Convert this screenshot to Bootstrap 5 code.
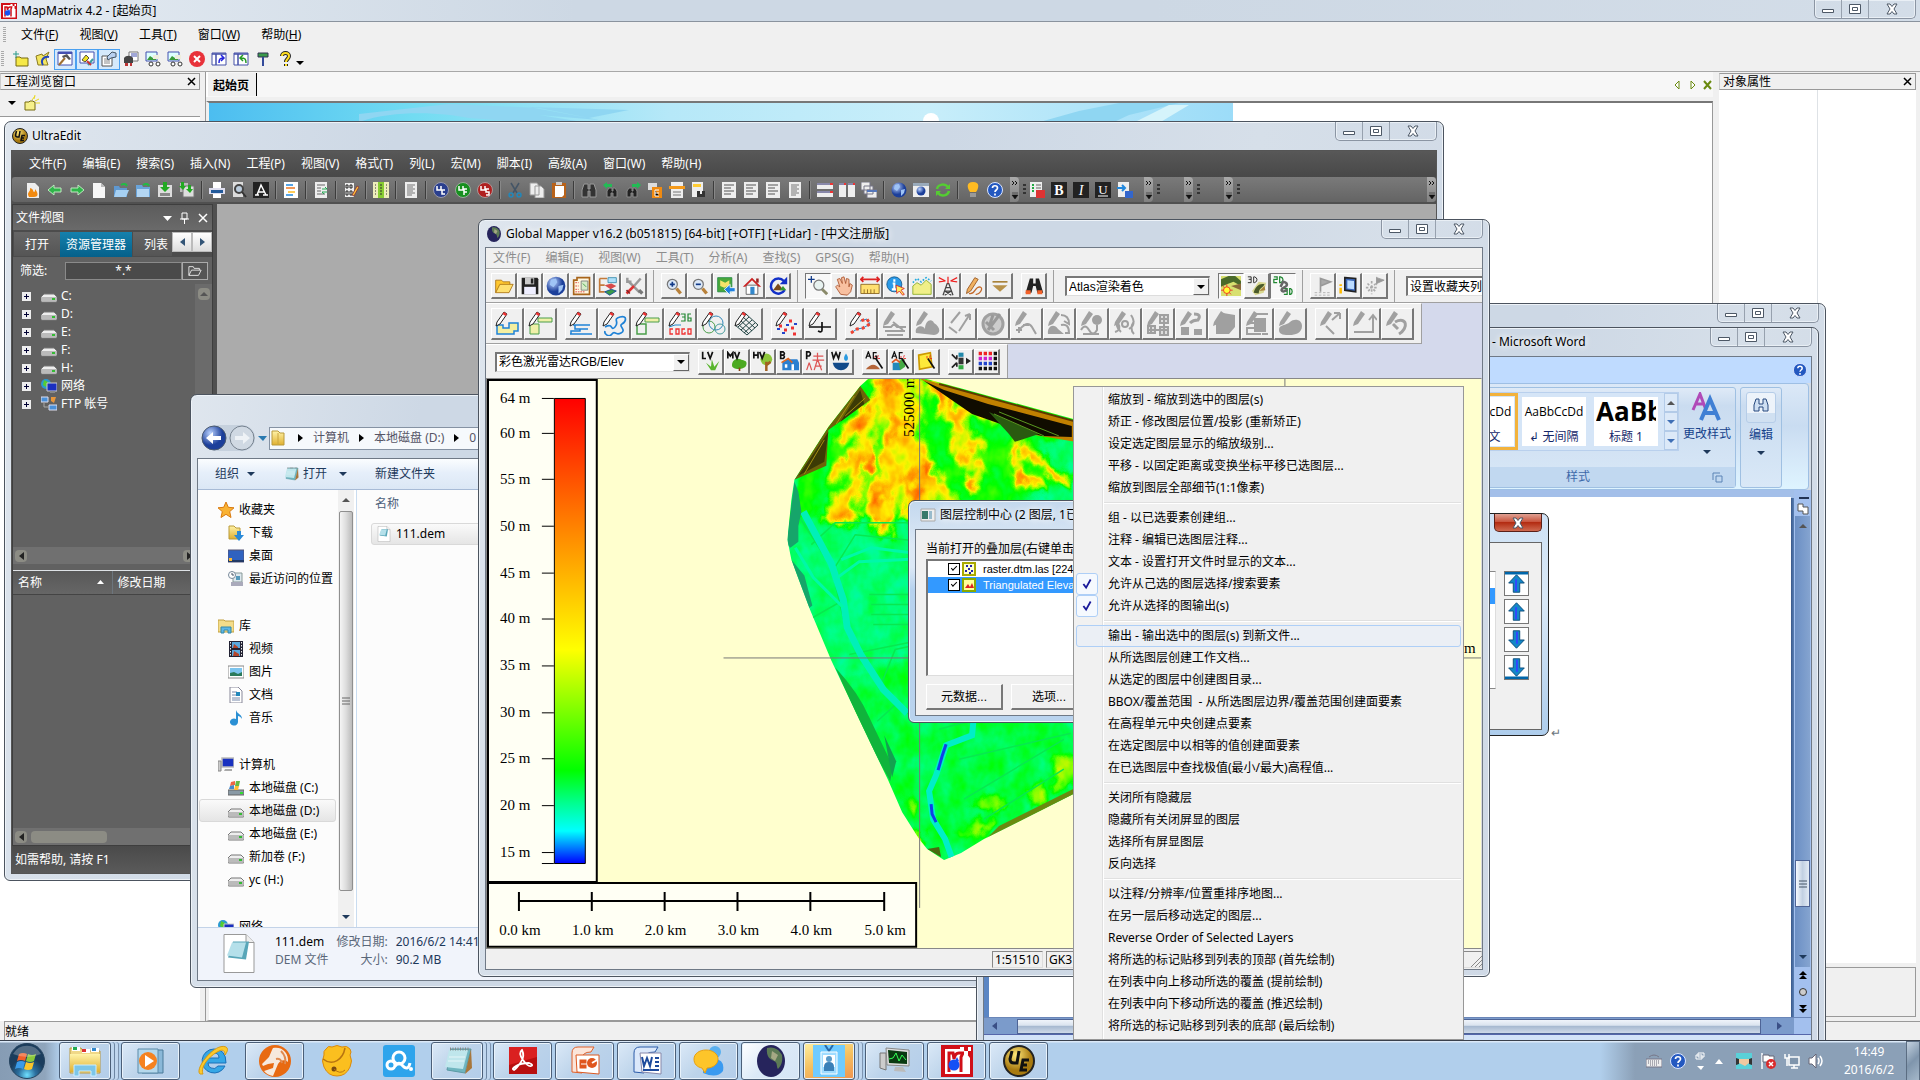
<!DOCTYPE html>
<html lang="zh-CN">
<head>
<meta charset="utf-8">
<meta name="viewport" content="width=device-width, initial-scale=1">
<title>MapMatrix 4.2 - [起始页]</title>
<link href="https://cdn.jsdelivr.net/npm/bootstrap@5.3.0/dist/css/bootstrap.min.css" rel="stylesheet">
<style>
body{font:12px/16px "Noto Sans","Noto Sans CJK SC",sans-serif;color:#000;background:#f0f0f0;height:100vh;overflow:hidden}
a{color:inherit;text-decoration:none}
button{font:inherit;color:inherit;padding:0;border:0;background:none;border-radius:0}
svg{display:block;flex:none}
.ic{width:16px;height:16px}
.plain{font-family:"Liberation Sans","Noto Sans CJK SC",sans-serif}
.desk{overflow:hidden;min-height:0}
/* window frame */
.win{position:absolute;border:1px solid #4c545f;border-radius:7px 7px 6px 6px;background:linear-gradient(100deg,#dfe6ee 0,#cdd8e5 25%,#cdd8e5 60%,#d6dfe9 80%,#cfd9e6);box-shadow:inset 0 0 0 1px #eef3f8;padding:0 6px 6px}
.win-title{height:28px;padding-left:1px;text-shadow:0 0 6px #fff,0 0 8px #fff}
.win-body{border:1px solid #6f7986;min-height:0}
.ctl{height:19px;border:1px solid #8b95a3;border-top:0;border-radius:0 0 5px 5px;box-shadow:inset 0 0 0 1px #e9eff5}
.ctl button{width:27px;height:18px;border-right:1px solid #97a1ae;display:flex;align-items:center;justify-content:center}
.ctl button:last-child{width:46px;border:0}
/* host application */
.mm-title{height:22px;background:linear-gradient(90deg,#e4ebf2 0,#cdd8e4 30%,#cdd8e4 60%,#d3dde8);border-bottom:1px solid #8a939e;padding-left:1px}
.mm-menu{height:25px;padding-left:10px}
.mm-menu a{padding:0 12px 0 9px}
.mm-tools{height:25px;padding-left:8px;border-bottom:1px solid #a8a8a8}
.mm-tools button{width:22px;height:21px;display:flex;align-items:center;justify-content:center}
.mm-tools .on{border:1px solid #4aa0f0;background:#d5e9fb}
.grip{width:3px;height:16px;margin-left:-7px;margin-right:6px;background:repeating-linear-gradient(#aaa 0 1px,transparent 1px 2px)}
.pane-head{height:17px;border:1px solid #999;border-left-color:#ccc;padding:0 3px;margin-top:1px}
.mm-left{width:200px}.mm-right{width:197px;margin-left:6px;margin-right:4px}
.mm-left-tools{height:27px;border-bottom:1px solid #999;padding-left:8px}
.mm-center{margin-left:5px;border-left:1px solid #999}
.mm-tabs{height:25px;background:#f7f7f7;border-left:2px solid #fff}
.mm-tab{padding:0 7px 0 5px;border-right:1px solid #000;background:#f0f0f0;height:23px;line-height:25px}
.mm-page{border:1px solid #999;border-top:2px solid #777;border-left:3px solid #f0f0f0;background:#fff;margin-top:4px}
.mm-note{height:50px;border:1px solid #999}
.banner{width:1024px;max-width:100%;height:60px}
.status{height:19px;border-top:1px solid #999;margin-left:4px;border-left:1px solid #999;line-height:20px}
/* UltraEdit */
.w-ue{left:4px;top:121px;width:1440px;height:760px}
.ue{background:#505050;color:#fff;border-color:#555}
.ue-menu{height:26px;background:linear-gradient(#585858,#484848);padding-left:9px}
.ue-menu a{padding:0 8px}
.ue-tools{height:25px;background:linear-gradient(#7a7a7a,#646464);border-radius:3px;padding-left:10px}
.ue-tools button{width:22px;height:22px;display:flex;align-items:center;justify-content:center}
.vr1{width:2px;height:18px;margin:0 3px;background:#3c3c3c;border-right:1px solid #888}
.dots{width:3px;height:12px;margin-right:3px;background:repeating-linear-gradient(#333 0 2px,transparent 2px 4px)}
.more{width:9px;height:25px;background:linear-gradient(#aaa,#808080);border-radius:0 4px 4px 0;display:flex;align-items:center;justify-content:center;margin-left:auto}
.ue-main{min-height:0;padding-top:2px}
.ue-side{width:201px;background:#616161;border:1px solid #3e3e3e}
.ue-head{height:25px;background:linear-gradient(#5c5c5c,#6a6a6a);padding:0 4px 0 3px}
.ue-tabs{height:27px;background:#4c4c4c;padding-top:2px}
.ue-tabs a{background:linear-gradient(#666,#555);height:24px;line-height:25px;padding:0 11px;margin-left:1px}
.ue-tabs a.on{background:linear-gradient(#1581ad,#05608a);padding:0 6px;height:25px;margin:0}
.ue-tabs .nudge{width:20px;height:20px;background:linear-gradient(#fff,#ddd);border:1px solid #bbb;color:#357;display:flex;align-items:center;justify-content:center}
.ue-filter{height:27px;padding:0 4px 0 7px}
.ue-filter input{width:117px;height:18px;background:#4a4a4a;border:1px solid #8a8a8a;color:#fff;text-align:center;padding:0;font:inherit}
.ue-filter button{width:26px;height:18px;border:1px solid #aaa;background:#555;display:flex;align-items:center;justify-content:center}
.ue-tree{padding:3px 0 0 9px;height:263px}
.ue-tree a{height:18px;display:flex;align-items:center}
.plus{width:9px;height:9px;margin-right:10px}
.ue-vs{width:17px;background:#6b6b6b}
.sbtn{width:12px;height:12px;border-radius:4px;background:#8c8c84;color:#222;display:flex;align-items:center;justify-content:center}
.sbtn.long{width:76px}
.ue-hs{height:17px;background:#707070;padding:0 1px 0 2px}
.ue-cols{height:25px;background:linear-gradient(#585858,#666);border-bottom:1px solid #444;margin-top:6px}
.ue-cols span{padding-left:5px;line-height:24px}
.ue-status{height:27px;background:linear-gradient(#4a4a4a,#5a5a5a);padding-left:3px;line-height:27px}
.ue-view{background:#ababab}
/* Explorer */
.w-ex{left:190px;top:394px;width:830px;height:594px}
.ex-nav{height:63px;padding:31px 0 8px 3px}
.addr{height:23px;border:1px solid #8592a3;background:#f6f9fc;color:#556}
.addr span{margin-right:10px}
.tri{width:0;height:0;border:4px solid transparent;border-right:0;border-left:5px solid #000}
.trl{width:0;height:0;border:4px solid transparent;border-left:0;border-right:5px solid currentColor}
.trr{width:0;height:0;border:4px solid transparent;border-right:0;border-left:5px solid currentColor}
.trd{width:0;height:0;border:4px solid transparent;border-bottom:0;border-top:4px solid #1e395b}
.tru{width:0;height:0;border:4px solid transparent;border-top:0;border-bottom:4px solid #555}
.ex-bar{height:31px;background:linear-gradient(#fbfdff,#e6effa 45%,#dbe7f5);border-bottom:1px solid #a7bbd6;color:#1e395b;padding-left:17px}
.ex-tree{width:140px;padding-top:8px;background:#fcfcfc;overflow:hidden}
.ex-tree a{height:23px;display:flex;align-items:center;gap:5px;padding-left:20px;white-space:nowrap;flex:none}
.ex-tree a.sub{padding-left:29px;margin-right:2px;margin-left:1px}
.ex-tree a.sel,.ex-item{border:1px solid #d9d9d9;border-radius:3px;background:linear-gradient(#fafafa,#e5e5e5)}
.ex-tree a.sel{padding-left:28px}
.ex-scroll{width:16px;background:#f0f0f0}
.ex-thumb{width:14px;height:380px;border:1px solid #8f8f8f;border-radius:2px;background:linear-gradient(90deg,#f5f5f5,#ddd 50%,#bbb)}
.ex-list{background:#fcfcfc;border-left:1px solid #c9dcf0;margin-left:2px;padding:6px 0 0 14px}
.ex-col{color:#4c607a;margin-bottom:11px;padding-left:4px}
.ex-item{height:22px;padding-left:4px}
.ex-det{height:53px;background:#f1f4fb;border-top:1px solid #c3d3e8;padding:5px 0 0 25px;line-height:18px;color:#5a6779}
.ex-det b{font-weight:400;color:#1e395b}
/* Word */
.w-wo{left:976px;top:303px;width:850px;bottom:-8px}
.w-wi{left:976px;top:327px;width:843px;bottom:-8px}
.wd-name{margin-left:508px}
.wd-tab{height:26px;background:#bfdbff;padding-right:4px}
.wd-rib{height:107px;background:linear-gradient(#dbe8f7,#c9dcf1 40%,#d2e4f6 60%,#def4ff);border:1px solid #9ebfe4;border-radius:0 4px 4px 0;margin-right:2px;padding:3px 26px 1px 0}
.wd-grp{border:1px solid #9fc0e2;border-radius:3px;background:linear-gradient(#dfeaf7,#cadcf0 18%,#d9e8f7);color:#15428b}
.wd-edit{width:42px}
.wd-grp .cap{height:20px;background:#c1d8f0;color:#3e6aaa;text-align:center;line-height:20px;padding-right:9px}
.cap-name{margin-right:120px}
.gal{height:59px;border:1px solid #b9d0ed;background:#d5e5f7;padding-left:4px}
.gal a{width:64px;height:49px;background:#fff;margin-right:8px;text-align:center;overflow:hidden;color:#000;white-space:nowrap;padding:7px 2px 0;line-height:16px}
.gal a span{font-family:"Open Sans",sans-serif}
.gal a small{display:block;font-size:12px;line-height:16px;margin-top:9px;color:#15286a}
.gal a.cur{outline:3px solid #f2b23c;outline-offset:1px}
.gal a.big{padding-top:0;margin-right:6px}
.gal a.big b{display:block;font:bold 26px/29px "Open Sans",sans-serif;width:60px;overflow:hidden;text-align:left}
.gal a.big small{margin-top:3px}
.gsc{width:14px}
.gsc i{border-top-color:#3f6fb5}
.gsc span{height:19px;border:1px solid #b3cbe8;display:flex;align-items:center;justify-content:center;background:#dce9f8}
.edbtn{width:30px;height:31px;border:1px solid #b6cde8;border-radius:3px;background:linear-gradient(#edf3fa 70%,#d0e0f1 70%)}
.wd-doc{background:#a3bfe9}
.wd-gl{width:10px;background:#5b86c4}
.wd-gr{width:7px;background:linear-gradient(90deg,#38588a,#5a80b5)}
.wd-page{background:#fff;margin-top:7px;padding:16px 226px 0 0}
.wd-ret{width:16px;margin-top:212px;padding-left:2px}
.wd-vs{width:17px;background:#a3c0ee}
.wd-track{background:linear-gradient(90deg,#6b8fc4,#85a4d0);margin:0 1px}
.wd-thumb{border:1px solid #4e6496;background:linear-gradient(90deg,#f5f9fe,#c2d0e2 50%,#e3ebf5);height:47px;width:15px}
.wd-hs{height:17px;background:#7b9bcb;border-top:1px solid #6a86b8;color:#3a4f86}
.wd-hth{height:15px;border:1px solid #4e6496;background:linear-gradient(#f0f4fa,#dbe4ef 40%,#a8bad1 50%,#cfdae8)}
.wd-corner{width:17px;height:16px;background:#a3c0ee}
.wd-foot{height:6px;background:#d3e3f8;border-top:1px solid #56a}
.shot{width:560px;height:223px;border:1px solid #222;border-radius:0 7px 7px 0;background:linear-gradient(#cfe2f5,#d9e8f6 40%,#aecdec);padding:0 6px 6px 0}
.xred{width:48px;height:18px;background:linear-gradient(#e0a193,#c9563f 45%,#b32c12 50%,#cf6a50);border:1px solid #5b2018;border-top:0;border-radius:0 0 5px 5px;display:flex;align-items:center;justify-content:center}
.shot-body{border:1px solid #666;background:#f0f0f0;margin-top:10px;height:188px;padding:28px 12px 0 0}
.shot-list{width:530px;height:118px;background:#fff;border:1px solid #888;border-right-color:#ddd;padding-top:16px}
.shot-list div{height:16px;background:#3399ff}
.shot-body button{width:25px;height:25px;border:1px solid #777;background:#fff;display:block;margin-bottom:3px}
/* Global Mapper */
.w-gm{left:478px;top:219px;width:1012px;height:758px}
.w-gm .win-title{height:27px}
.gm{background:#f0f0f0}
.gm-menu{height:21px;color:#8d8d8d;border-bottom:1px solid #aaa}
.gm-menu a{padding:0 8px 0 7px}
.gm-row{background:#d4d9ec;overflow:hidden}
.gm-strip{background:#f0f0f0;border-top:1px solid #fff;border-bottom:1px solid #a0a0a0;border-right:1px solid #a0a0a0;padding:0 7px 0 5px;height:34px}
.gm-strip.tall{height:41px}
.gb{width:26px;height:26px;border:1px solid #fff;border-right:2px solid #777;border-bottom:2px solid #777;display:flex;align-items:center;justify-content:center;flex:none}
.gb svg{width:20px;height:20px}
.tall .gb{width:33px;height:32px}
.tall .gb svg{width:26px;height:26px}
.gb.on{border:1px solid #777;border-right-color:#fff;border-bottom-color:#fff;background:#f8f8f8}
.gs{width:8px;flex:none}
.gv{width:1px;height:32px;background:#a0a0a0;margin:0 7px 0 6px;flex:none}
.dd{height:20px;border:2px solid #777;border-right:1px solid #ddd;border-bottom:1px solid #ddd;background:#fff;display:flex;flex:none}
.dd select{appearance:none;border:0;background:#fff;font:inherit;padding:0 2px;flex:1;min-width:0;color:#000;line-height:16px}
.dd i{width:16px;background:#f0f0f0;border:1px solid #fff;border-right-color:#666;border-bottom-color:#666;display:flex;align-items:center;justify-content:center}
.dd .trd,.mm-tools .trd,.mm-left-tools .trd{border-top-color:#000}
.dd-a{width:145px}.dd-b{width:195px}.dd-c{width:130px}
.gm-map{border:1px solid #888;border-right-color:#ddd;background:#ffffce;overflow:hidden;min-height:0}
.gm-map svg{width:100%;height:100%}
.gm-map text{font:15px "Liberation Serif",serif}
.gm-st{height:20px;padding:2px 0 2px 506px}
.gm-st span{border:1px solid #888;border-right-color:#ddd;border-bottom-color:#ddd;padding:0 2px;width:51px;margin-right:3px;line-height:15px;height:17px;white-space:nowrap}
.gm-st .wide{flex:1}
.sizer{margin-left:-12px}
/* layer dialog */
.w-ly{left:908px;top:500px;width:540px;height:223px;background:linear-gradient(#c3d8ee,#dce8f5 20%,#dbe8f5 30%,#b6d2ee 40%,#b9d3ee)}
.ly{background:#f0f0f0;padding:11px 12px 0 10px}
.ly-list{border:2px solid #777;border-right:1px solid #ddd;border-bottom:1px solid #ddd;background:#fff;height:117px;margin-top:2px;font-size:11px}
.ly-list label{height:16px;display:flex;align-items:center;padding-left:20px;white-space:nowrap}
.ly-list label.sel{background:#3399ff;color:#fff}
.ly-list input{appearance:none;width:12px;height:12px;background:#fff;border:1px solid #000;margin:0 2px 0 0;position:relative}
.ly-list input::after{content:"";position:absolute;left:2px;top:2px;width:6px;height:3px;border:solid #000;border-width:0 0 1px 1px;transform:rotate(-45deg)}
.ly-list svg{width:14px;height:14px;margin-right:7px}
.ly .cmd{width:77px;height:26px;border:1px solid #fff;border-right:2px solid #777;border-bottom:2px solid #777;background:#f0f0f0}
/* context menu */
.ctx{position:absolute;left:1073px;top:386px;width:391px;background:linear-gradient(90deg,#f1f1f1 28px,#e0e0e0 28px 29px,#fff 29px 30px,#f0f0f0 30px);border:1px solid #979797;padding:2px;z-index:5}
.ctx a{display:flex;align-items:center;height:22px;padding-left:32px;white-space:pre;border-radius:3px;margin:0}
.ctx a.hot{border:1px solid #aecff7;background:rgba(232,239,248,.6);padding-left:31px}
.ctx hr{margin:3px 0 3px 28px;border:0;border-top:1px solid #e0e0e0;border-bottom:1px solid #fff;opacity:1;height:2px}
.ctx a.ck{padding-left:0}
.ctx a.ck svg{width:22px;height:22px;border:1px solid #aecff7;background:#f5f9fe;border-radius:3px;margin-right:10px}
/* taskbar */
.task{height:40px;background:linear-gradient(#dbe9f8 0 1px,transparent 2px),linear-gradient(90deg,#869cb4 0,#8fa5bc 45px,#b1cfec 60px,#b1cfec 1600px,#8ba0b7 1635px,#8ba0b7);border-top:1px solid #39414d;position:relative;z-index:6}
.orb{width:59px;display:flex;align-items:center;justify-content:center;padding-right:5px}
.tk{width:59px;height:38px;margin-right:3px;display:flex;align-items:center;justify-content:center}
.tk svg{width:32px;height:32px}
.tk.run{border:1px solid #4b5f78;border-radius:3px;background:linear-gradient(135deg,#dbe9f7,#bcd3ea 50%,#b3cdea);box-shadow:inset 0 0 0 1px #e8f2fb}
.tk.act{background:linear-gradient(135deg,#fff,#dbe9f7 50%,#d5e5f5)}
.tk.stk{width:52px;box-shadow:inset 0 0 0 1px #e8f2fb,3px 0 0 #bfd6ee,4px 0 0 #6d86a3,7px 0 0 #bfd6ee,8px 0 0 #7d94b0;margin-right:10px}
.tk.hot{background:linear-gradient(160deg,#fff0a0,#f4c060 50%,#ef9350)}
.tray{color:#fff;gap:8px}
.clock{width:74px;text-align:center;line-height:18px}
.peek{width:14px;height:40px;border:1px solid #5b6d82;background:linear-gradient(135deg,#c4d2e0,#7f95ac 50%,#a5b8ca)}
</style>
<script src="https://cdn.jsdelivr.net/npm/bootstrap@5.3.0/dist/js/bootstrap.bundle.min.js"></script>
</head>
<body class="d-flex flex-column">
<svg width="0" height="0" class="position-absolute" aria-hidden="true">
<defs>
<linearGradient id="gold" x2="0" y2="1"><stop stop-color="#fff3a8"/><stop offset="1" stop-color="#e0b030"/></linearGradient>
<radialGradient id="ball" cx=".35" cy=".3"><stop stop-color="#bcd4ff"/><stop offset="1" stop-color="#1c3f9a"/></radialGradient>
<radialGradient id="orbg" cx=".5" cy=".9"><stop stop-color="#6fe0ff"/><stop offset=".5" stop-color="#2b6f9e"/><stop offset="1" stop-color="#1b3d5d"/></radialGradient>
<radialGradient id="uegold" cx=".4" cy=".3"><stop stop-color="#ffe87a"/><stop offset="1" stop-color="#a87a10"/></radialGradient>
<g id="pencil"><path d="M3 12 10 2l3 2-7 10-4 2z" fill="#fff" stroke="#222"/><path d="M10 2l3 2-1.500 2-3-2z" fill="#e33"/></g>
<g id="gpen" fill="#a0a0a0"><path d="M3 12 10 1l4 3-7 10-5 2z"/></g>
<g id="wand" fill="none"><path d="M13 9l8 12" stroke="#111" stroke-width="2"/><path d="M12 6v3M16 5l-1 3M18 9l-3 0" stroke="#e22"/></g>
</defs>
<symbol id="mm" viewBox="0 0 32 32"><path d="M0 0h32v32H0z" fill="#d00f18"/><path d="M4 4h18l7 9v16H4z" fill="#fff"/><path d="M8 27V8h4l1 6q1-6 5-6h4l-2 4v15" fill="none" stroke="#d00f18" stroke-width="3"/><circle cx="13" cy="20" r="5.500" fill="#1450f5"/><path d="M16 12l-4 8 6-4z" fill="#1450f5"/><path d="M19 2h4v4h4v4h-4V6h-4zM27 2h3v4h-3z" fill="#fff"/></symbol>
<symbol id="fnew" viewBox="0 0 16 16"><path d="M3 6h4l1 1h7v8H3z" fill="#f6e948" stroke="#776a10"/><path d="M3 0v7M0 3h6" stroke="#2a9a8a"/></symbol>
<symbol id="fspark" viewBox="0 0 16 16"><path d="M1 7h4l1-1h3l1 1h1v8H1z" fill="#f6f08a" stroke="#776a10"/><path d="M8 5l3-4M11 6l4-2M12 8h4M10 4l1-4" stroke="#e8d820"/></symbol>
<symbol id="opy" viewBox="0 0 16 16"><path d="M1 5l6-2 1 2 6-4-3 7 2 6H3z" fill="#f2e560" stroke="#8a7a20"/><path d="M8 14c-3-5 1-9 6-8" fill="none" stroke="#2244b8" stroke-width="2"/></symbol>
<symbol id="ham" viewBox="0 0 16 16"><path d="M1 1h14v13H1z" fill="#fff" stroke="#4450b0"/><path d="M1 2h14" stroke="#4450b0" stroke-width="2"/><path d="M2 14l6-7" stroke="#a07030" stroke-width="2"/><path d="M5 5l5-2 4 5-2 1-3-3-3 1z" fill="#555"/></symbol>
<symbol id="tools" viewBox="0 0 16 16"><path d="M1 1h14v11H1z" fill="#fff" stroke="#4450b0"/><path d="M3 9l4-5 3 3-4 4z" fill="#f0e020" stroke="#554"/><path d="M9 14l5-6" stroke="#3aa0a0" stroke-width="2"/><path d="M8 10l4 4" stroke="#c33" stroke-width="2"/></symbol>
<symbol id="props" viewBox="0 0 16 16"><path d="M1 5h10v10H1z" fill="#fff" stroke="#555"/><path d="M3 8h6M3 10h6M3 12h6" stroke="#888"/><path d="M6 6l5-5 4 1v4l-5 1-3 2z" fill="#b8d0f0" stroke="#456"/></symbol>
<symbol id="cam" viewBox="0 0 16 16"><path d="M6 1h9v9H6z" fill="#fff" stroke="#777"/><path d="M8 3h6M8 5h6" stroke="#4450b0"/><path d="M1 7c2-3 7-3 9 0v5H1z" fill="#444"/><path d="M2 12v3h3v-3M7 12v3h2v-3" fill="#b33"/></symbol>
<symbol id="car" viewBox="0 0 16 16"><path d="M1 1h11v9H1z" fill="#dff" stroke="#4450b0"/><path d="M2 9l3-4 3 2 3-3v5z" fill="#3a9a3a"/><path d="M8 4h6v4H8z" fill="#eed"/><circle cx="6" cy="13" r="2" fill="#fff" stroke="#333"/><circle cx="13" cy="13" r="2" fill="#fff" stroke="#333"/></symbol>
<symbol id="stop" viewBox="0 0 16 16"><circle cx="8" cy="8" r="8" fill="#e8323a"/><path d="M5 5l6 6M11 5l-6 6" stroke="#fff" stroke-width="2"/></symbol>
<symbol id="wf" viewBox="0 0 16 16"><path d="M1 2h14v12H1z" fill="#fff" stroke="#4450a8"/><path d="M1 3h14M5 3v11" stroke="#4450a8" stroke-width="1.500"/><path d="M8 12c0-4 1-5 5-5M10 4l3 3-3 3" fill="none" stroke="#22d" stroke-width="1.500"/></symbol>
<symbol id="wb" viewBox="0 0 16 16"><path d="M1 2h14v12H1z" fill="#fff" stroke="#4450a8"/><path d="M1 3h14M5 3v11" stroke="#4450a8" stroke-width="1.500"/><path d="M13 12c0-4-1-5-5-5M10 4L7 7l3 3" fill="none" stroke="#292" stroke-width="1.500"/></symbol>
<symbol id="tee" viewBox="0 0 16 16"><path d="M3 2h10v4H3z" fill="#3a9a4a" stroke="#335"/><path d="M8 6v9" stroke="#334a9a" stroke-width="2"/></symbol>
<symbol id="qy" viewBox="0 0 16 16"><path d="M5 5c0-4 7-4 7 0 0 3-3 3-3 6M9 13v2" fill="none" stroke="#222" stroke-width="4"/><path d="M5 5c0-4 7-4 7 0 0 3-3 3-3 6M9 13v2" fill="none" stroke="#fd2" stroke-width="2"/></symbol>
<symbol id="ue" viewBox="0 0 32 32"><circle cx="16" cy="16" r="15" fill="url(#uegold)" stroke="#222" stroke-width="2"/><path d="M9 6l-2 8q0 4 4 4h3l2-12" fill="none" stroke="#111" stroke-width="3"/><path d="M26 15h-6l-2 10h6M19 20h5" fill="none" stroke="#111" stroke-width="3"/></symbol>
<symbol id="fl" viewBox="0 0 16 16"><path d="M2 1h8l4 4v11H2z" fill="#eee"/><path d="M4 15c-3-5 2-5 1-9 4 1 3 4 4 4s1-2 1-3c4 5 3 8-1 8z" fill="#f28a10"/></symbol>
<symbol id="al" viewBox="0 0 16 16"><path d="M1 8l6-5v3h7v4H7v3z" fill="#2fb54a" stroke="#bfe8c0"/></symbol>
<symbol id="ar" viewBox="0 0 16 16"><path d="M15 8L9 3v3H2v4h7v3z" fill="#2fb54a" stroke="#bfe8c0"/></symbol>
<symbol id="doc" viewBox="0 0 16 16"><path d="M2 1h8l4 4v11H2z" fill="#f6f6f6"/><path d="M10 1l4 4h-4z" fill="#bbb"/></symbol>
<symbol id="fb" viewBox="0 0 16 16"><path d="M1 4h5l1 2h7v9H1z" fill="#5f98d0"/><path d="M3 8h13l-3 7H1z" fill="#a6d0f2"/><path d="M8 3c3-2 5-1 6 1" fill="none" stroke="#2b4" stroke-width="2"/></symbol>
<symbol id="fb2" viewBox="0 0 16 16"><path d="M1 3h6l1 2h7v10H1z" fill="#6aa4da"/><path d="M2 7h12v8H2z" fill="#b3d6f3"/><path d="M8 3c3-2 5-1 6 1" fill="none" stroke="#2b4" stroke-width="2"/></symbol>
<symbol id="sv" viewBox="0 0 16 16"><path d="M1 3h14v12H1z" fill="#ddd"/><path d="M6 0h4v5h3l-5 5-5-5h3z" fill="#2a2"/><path d="M3 11h10v3H3z" fill="#888"/></symbol>
<symbol id="sva" viewBox="0 0 16 16"><path d="M1 1h8v9H1z" fill="#bbb"/><path d="M4 4h11v11H4z" fill="#ddd" stroke="#777"/><path d="M2 0h3v4h2L4 8 0 4h2zM9 3h3v4h2l-3 4-4-4h2z" fill="#2a2"/></symbol>
<symbol id="prn" viewBox="0 0 16 16"><path d="M4 0h8v6H4zM4 11h8v5H4z" fill="#fff"/><path d="M0 6h16v6H0z" fill="#dde"/><path d="M2 8h12v3H2z" fill="#235a9a"/></symbol>
<symbol id="prv" viewBox="0 0 16 16"><path d="M2 0h10v15H2z" fill="#ddd"/><circle cx="8" cy="7" r="4" fill="#bcd" stroke="#444" stroke-width="2"/><path d="M11 10l4 5" stroke="#333" stroke-width="2"/></symbol>
<symbol id="fa" viewBox="0 0 16 16"><path d="M0 0h16v16H0z" fill="#222"/><path d="M2 13h4M10 13h5M4 13L8 3l5 10M5 10h6" fill="none" stroke="#fff" stroke-width="1.500"/></symbol>
<symbol id="lc" viewBox="0 0 16 16"><path d="M1 0h14v16H1z" fill="#fff"/><path d="M3 3h7M3 13h7" stroke="#28d" stroke-width="1.500"/><path d="M3 6h9" stroke="#e72" stroke-width="1.500"/><path d="M5 10h7" stroke="#fb2" stroke-width="1.500"/></symbol>
<symbol id="lg" viewBox="0 0 16 16"><path d="M2 0h12v16H2z" fill="#eee"/><path d="M4 3h8M4 6h4M4 9h4M4 12h8" stroke="#666"/><path d="M9 7h5l-2-2M14 10H9l2 2" stroke="#2a5" fill="none"/></symbol>
<symbol id="hx" viewBox="0 0 16 16"><path d="M2 1h9v14H2z" fill="#eee"/><path d="M3 3h2v3H3zM7 3h2v3H7zM3 9h2v4H3zM7 9h2v4H7z" fill="none" stroke="#222"/><path d="M9 13l5-9 2 1-5 9z" fill="#fb3" stroke="#844"/></symbol>
<symbol id="cl" viewBox="0 0 16 16"><path d="M0 0h16v16H0z" fill="#eeb"/><path d="M5 0h6v16H5z" fill="#8c3"/><path d="M2 3h1M2 6h1M2 9h1M2 12h1M7 3h2M7 6h2M7 9h2M7 12h2M13 3h1M13 6h1M13 9h1M13 12h1" stroke="#333"/></symbol>
<symbol id="ln" viewBox="0 0 16 16"><path d="M2 0h12v16H2z" fill="#eee"/><path d="M4 3h8M4 5h6M4 7h8M4 9h6M4 11h8M4 13h5" stroke="#777"/></symbol>
<symbol id="uc" viewBox="0 0 16 16"><circle cx="8" cy="8" r="7.500" fill="#2a3f8e" stroke="#99a"/><path d="M4 4v4h4V4M12 8H9v4h3" fill="none" stroke="#fff" stroke-width="1.500"/></symbol>
<symbol id="uf" viewBox="0 0 16 16"><circle cx="8" cy="8" r="7.500" fill="#17901f" stroke="#9a9"/><path d="M4 4v4h4V4M12 7H9v6M9 10h3" fill="none" stroke="#fff" stroke-width="1.500"/></symbol>
<symbol id="us" viewBox="0 0 16 16"><circle cx="8" cy="8" r="7.500" fill="#b02020" stroke="#a99"/><path d="M4 4v4h4V4M12 7H9v3h3v3H9" fill="none" stroke="#fff" stroke-width="1.500"/></symbol>
<symbol id="cut" viewBox="0 0 16 16"><path d="M4 1l6 10M12 1L6 11" stroke="#456" stroke-width="1.500"/><circle cx="4" cy="13" r="2" fill="none" stroke="#28b" stroke-width="1.500"/><circle cx="12" cy="13" r="2" fill="none" stroke="#28b" stroke-width="1.500"/></symbol>
<symbol id="cpy" viewBox="0 0 16 16"><path d="M1 1h7l2 3v9H1zM6 4h6l3 3v9H6z" fill="#eee" stroke="#999"/></symbol>
<symbol id="pst" viewBox="0 0 16 16"><path d="M1 1h14v15H1z" fill="#b8621a"/><path d="M4 4h9v9l-2 2H4z" fill="#fff"/><path d="M5 0h6v3H5z" fill="#ccc"/></symbol>
<symbol id="bn" viewBox="0 0 16 16"><path d="M1 15V8l2-6h4v5h2V2h4l2 6v7H9V9H7v6z" fill="#333" stroke="#999"/></symbol>
<symbol id="bl" viewBox="0 0 16 16"><path d="M4 15V9l2-3h3v3h1V6h2l2 3v6h-4v-4H8v4z" fill="#222" stroke="#888"/><path d="M0 3l4-3v2h5v3H4v2z" fill="#2b5"/></symbol>
<symbol id="br" viewBox="0 0 16 16"><path d="M2 15V9l2-3h3v3h1V6h2l2 3v6H8v-4H6v4z" fill="#222" stroke="#888"/><path d="M16 3l-4-3v2H7v3h5v2z" fill="#2b5"/></symbol>
<symbol id="bk" viewBox="0 0 16 16"><path d="M1 1h9v7H1z" fill="#ddd"/><path d="M5 5h10v11H5z" fill="#f08a10"/><path d="M8 8h4M8 11h4M8 8v6h4" stroke="#fff"/></symbol>
<symbol id="hl" viewBox="0 0 16 16"><path d="M2 0h12v16H2z" fill="#eee"/><path d="M0 4h16v3H0z" fill="#f59a1a"/><path d="M4 10h8M4 13h8" stroke="#777"/></symbol>
<symbol id="fi" viewBox="0 0 16 16"><path d="M1 0h11v15H1z" fill="#eee"/><path d="M2 2h8v3H2z" fill="#fc3"/><path d="M6 15V9h3v3h2V9h3v6z" fill="#333"/></symbol>
<symbol id="tx" viewBox="0 0 16 16"><path d="M1 0h14v16H1z" fill="#eee"/><path d="M3 3h10M3 6h7M3 9h10M3 12h7" stroke="#555"/></symbol>
<symbol id="w2" viewBox="0 0 16 16"><path d="M0 1h16v6H0zM0 9h16v6H0z" fill="#eee"/><path d="M0 1h16v2H0zM0 9h16v2H0z" fill="#88a"/><path d="M13 1h3v2h-3zM13 9h3v2h-3z" fill="#e33"/></symbol>
<symbol id="w2v" viewBox="0 0 16 16"><path d="M0 1h7v14H0zM9 1h7v14H9z" fill="#eee"/><path d="M0 1h7v2H0zM9 1h7v2H9z" fill="#88a"/><path d="M5 1h2v2H5zM14 1h2v2h-2z" fill="#e33"/></symbol>
<symbol id="w3" viewBox="0 0 16 16"><path d="M0 0h9v8H0zM3 4h9v8H3zM6 8h10v8H6z" fill="#eee" stroke="#778"/><path d="M6 8h10v2H6z" fill="#57b"/></symbol>
<symbol id="ww" viewBox="0 0 16 16"><path d="M0 1h16v14H0z" fill="#eee"/><path d="M0 1h16v3H0z" fill="#9ab"/><circle cx="8" cy="9" r="4.500" fill="url(#ball)"/></symbol>
<symbol id="glb" viewBox="0 0 16 16"><circle cx="8" cy="8" r="7.500" fill="url(#ball)"/><path d="M4 3l4-1 1 3-3 4-3-2zM10 8l4-1-1 4-3 3z" fill="#9fc4f5"/></symbol>
<symbol id="gma" viewBox="0 0 32 32"><ellipse cx="16" cy="16" rx="14" ry="16" fill="#26245c"/><path d="M12 3c6-2 12 1 15 7 1 7-1 11-4 14-2-3 0-6-4-8s-8-4-7-13z" fill="#5c7a55"/><path d="M17 6l6 4-3 6-4-3z" fill="#a5a884"/></symbol>
<symbol id="rf" viewBox="0 0 16 16"><path d="M2 7c1-5 8-6 11-2M14 9c-1 5-8 6-11 2" fill="none" stroke="#5c3" stroke-width="2.500"/><path d="M15 2v5h-5zM1 14V9h5z" fill="#5c3"/></symbol>
<symbol id="blb" viewBox="0 0 16 16"><path d="M8 0c7 0 6 6 3 10H5C2 6 1 0 8 0z" fill="#fb2"/><path d="M5 11h6v4H5z" fill="#999"/></symbol>
<symbol id="hp" viewBox="0 0 16 16"><circle cx="8" cy="8" r="7.500" fill="#2358c0" stroke="#dbe6ff"/><path d="M5.500 6c0-3 5-3 5 0 0 2-2.500 2-2.500 4M8 11.500v2" fill="none" stroke="#fff" stroke-width="1.700"/></symbol>
<symbol id="lr" viewBox="0 0 16 16"><path d="M1 0h12v15H1z" fill="#eee"/><path d="M3 3h2M3 6h2M3 9h2" stroke="#2a4" stroke-width="2"/><path d="M7 3h5M7 6h5" stroke="#666"/><path d="M7 8h9v8H7z" fill="#d33"/></symbol>
<symbol id="cd" viewBox="0 0 16 16"><path d="M1 0h11v15H1z" fill="#eee"/><path d="M0 6h7M5 3l3 3-3 3" stroke="#28d" fill="none" stroke-width="2"/><path d="M8 9h8v7H8z" fill="#36c"/></symbol>
<symbol id="drv" viewBox="0 0 16 16"><path d="M3 6h10l3 3v4q0 1-1 1H1q-1 0-1-1V9z" fill="#eee" stroke="#777"/><path d="M1 9h14v4H1z" fill="#bbb"/><path d="M11 10h3v2h-3z" fill="#3b3"/></symbol>
<symbol id="drw" viewBox="0 0 16 16"><path d="M0 10h16v5H0z" fill="#8a9aa6" stroke="#666"/><path d="M3 2l4-1v4L2 6z" fill="#e64"/><path d="M8 1h4l-1 5H7z" fill="#6b4"/><path d="M2 6l4-1v4H1z" fill="#48c"/><path d="M7 6h4l-1 4H6z" fill="#fb3"/><path d="M12 12h3v2h-3z" fill="#3d3"/></symbol>
<symbol id="net" viewBox="0 0 16 16"><circle cx="5" cy="6" r="5" fill="#2a9ad0"/><path d="M3 2l4 2-2 5-3-2z" fill="#5c3"/><path d="M6 5h10v8H6z" fill="#1a2fc0" stroke="#ccc"/><path d="M9 14h5" stroke="#888" stroke-width="2"/></symbol>
<symbol id="ftp" viewBox="0 0 16 16"><path d="M0 1h7v5H0zM8 9h8v5H8z" fill="#4a90d8" stroke="#dde"/><path d="M10 1h5l-2 6-3-2z" fill="#e8963a"/><path d="M3 7v4h5" stroke="#aaa" fill="none"/></symbol>
<symbol id="fo" viewBox="0 0 16 16"><path d="M1 3h5l1 2h6v2M1 3v10h11l3-6H4l-3 6" fill="none" stroke="#eee"/></symbol>
<symbol id="plusbox" viewBox="0 0 9 9"><path d="M0 0h9v9H0z" fill="#eee"/><path d="M2 4.500h5M4.500 2v5" stroke="#003"/></symbol>
<symbol id="dbl" viewBox="0 0 8 20"><path d="M1 1l2 2-2 2M4 1l2 2-2 2" fill="none" stroke="#111"/><path d="M1 13h6M1 15h6l-3 4z" fill="#111" stroke="#111" stroke-width=".5"/></symbol>
<symbol id="fld" viewBox="0 0 16 16"><path d="M2 1h6l2 2h4v12H2z" fill="url(#gold)" stroke="#b99a3a"/><path d="M8 3v12" stroke="#caa640"/></symbol>
<symbol id="star" viewBox="0 0 16 16"><path d="M8 0l2.300 5.300 5.700.5-4.300 3.800L13 15.500 8 12.300 3 15.500l1.300-5.900L0 5.800l5.700-.5z" fill="#f9b233" stroke="#d87a10"/></symbol>
<symbol id="dl" viewBox="0 0 16 16"><path d="M1 1h5l2 2h4v11H1z" fill="url(#gold)" stroke="#b99a3a"/><path d="M9 6h4v4h3l-5 6-5-6h3z" fill="#2a8ad8"/></symbol>
<symbol id="dsk" viewBox="0 0 16 16"><path d="M0 2h16v12H0z" fill="#2f62c0" stroke="#557"/><path d="M0 12h16v2H0z" fill="#223a66"/><path d="M1 10h3v3H1z" fill="#fb3"/></symbol>
<symbol id="rec" viewBox="0 0 16 16"><path d="M5 2h9v9H5z" fill="#dde8ee" stroke="#899"/><path d="M3 11h12v4H3z" fill="#aab"/><circle cx="4" cy="4" r="3.500" fill="#fff" stroke="#789"/><path d="M4 2v2h2" stroke="#456" fill="none"/><path d="M8 5h4v4H8z" fill="#59b"/></symbol>
<symbol id="lib" viewBox="0 0 16 16"><path d="M0 2h6l1 1h9v11H0z" fill="#f3dc8a" stroke="#c2a040"/><path d="M3 15V9h10v6h-3v-3H6v3z" fill="#5cb6e6" stroke="#38a"/></symbol>
<symbol id="vid" viewBox="0 0 16 16"><path d="M1 0h14v16H1z" fill="#223"/><path d="M4 1h8v6H4zM4 9h8v6H4z" fill="#5aa8dd"/><path d="M6 3l4 3v1H5zM6 10l5 3v2H5z" fill="#b4452a"/><path d="M2.500 1v14M13.500 1v14" stroke="#eee" stroke-dasharray="1.500 1.500"/></symbol>
<symbol id="pic" viewBox="0 0 16 16"><path d="M0 2h16v12H0z" fill="#fff" stroke="#888"/><path d="M2 4h12v8H2z" fill="#7cc4ee"/><path d="M2 9l4-1 4 2 4-2v4H2z" fill="#2a7a5a"/></symbol>
<symbol id="dcm" viewBox="0 0 16 16"><path d="M2 0h8l4 4v12H2z" fill="#fff" stroke="#889"/><path d="M4 5h5M4 8h8M4 11h8M4 13h8" stroke="#78a"/><path d="M8 5h4v4H8z" fill="#28b"/></symbol>
<symbol id="mus" viewBox="0 0 16 16"><path d="M8 0c1 4 6 4 6 9-1-2-3-3-4-3v6a4 3.500 0 1 1-2-3z" fill="#2b90d4"/></symbol>
<symbol id="pc" viewBox="0 0 16 16"><path d="M4 1h12v9H4z" fill="#1a32c0" stroke="#bbb" stroke-width="1.500"/><path d="M0 4h3v10H0z" fill="#ccc" stroke="#888"/><path d="M7 12h7v2H6z" fill="#aaa"/></symbol>
<symbol id="np" viewBox="0 0 32 32"><path d="M10 4h20l-6 24-18-3z" fill="#6fb5bf" stroke="#5a9aa4"/><path d="M8 5h19l-5 19-18-2z" fill="#bfe6ec"/><path d="M9 4h19" stroke="#888" stroke-width="3" stroke-dasharray="1 1.500"/><path d="M30 4l1 19-7 6z" fill="#a8763a"/><path d="M8 12h16M7 16h16" stroke="#fff" opacity=".6"/></symbol>
<symbol id="npd" viewBox="0 0 32 40"><path d="M1 1h22l8 8v30H1z" fill="#fff" stroke="#999"/><path d="M23 1v8h8" fill="#eee" stroke="#999"/><path d="M10 8h16l-3 18-18-2z" fill="#58a6b8"/><path d="M9 9h14l-4 15-15-2z" fill="#b5e0ea"/></symbol>
<!-- 24-unit mapper icons -->
<symbol id="g-open" viewBox="0 0 24 24"><path d="M2 20V5h7l2 2h8v4" fill="#ffc830" stroke="#a87010"/><path d="M2 20l5-10h16l-5 10z" fill="#ffe070" stroke="#a87010"/></symbol>
<symbol id="g-save" viewBox="0 0 24 24"><path d="M2 2h19l1 2v18H2z" fill="#222"/><path d="M6 2h11v8H6z" fill="#ccc"/><path d="M5 13h14v9H5z" fill="#eef"/><path d="M13 3h3v6h-3z" fill="#222"/></symbol>
<symbol id="g-lay" viewBox="0 0 24 24"><path d="M6 2h15v20H2V5h4z" fill="#fff7e0" stroke="#a8641a" stroke-width="2"/><path d="M11 6h8v11h-8z" fill="#d6ecc8" stroke="#777"/><path d="M13 9l4 4" stroke="#393"/><path d="M4 8h4M4 12h4M4 16h4M4 19h12" stroke="#d33" stroke-dasharray="2 1"/></symbol>
<symbol id="g-3l" viewBox="0 0 24 24"><path d="M2 3h9M2 3v16h6M2 11h6" fill="none" stroke="#c37a3a" stroke-width="2"/><path d="M12 2h10v6H12z" fill="#aee0fa" stroke="#38a"/><path d="M8 11l8-2 6 3-7 4z" fill="#d64a4a"/><path d="M8 19l8-3 6 2-8 5z" fill="#3a9a4a" stroke="#149"/></symbol>
<symbol id="g-tool" viewBox="0 0 24 24"><path d="M5 6l14 14M4 2v5h5M20 3l-8 9" fill="none" stroke="#999" stroke-width="3"/><path d="M12 12l-9 9" stroke="#d33" stroke-width="3"/><path d="M3 17l4 4" stroke="#822" stroke-width="2"/><path d="M18 17l4 4" stroke="#777" stroke-width="4"/></symbol>
<symbol id="g-zi" viewBox="0 0 24 24"><circle cx="10" cy="10" r="6" fill="#dbe8f8" stroke="#777" stroke-width="1.500"/><path d="M7 10h6M10 7v6" stroke="#113a88" stroke-width="2"/><path d="M15 15l5 6" stroke="#b8813a" stroke-width="4"/></symbol>
<symbol id="g-zo" viewBox="0 0 24 24"><circle cx="10" cy="10" r="6" fill="#dbe8f8" stroke="#777" stroke-width="1.500"/><path d="M7 10h6" stroke="#113a88" stroke-width="2"/><path d="M15 15l5 6" stroke="#b8813a" stroke-width="4"/></symbol>
<symbol id="g-fv" viewBox="0 0 24 24"><path d="M2 2h17v17H2z" fill="#4aa83a" stroke="#284"/><path d="M5 5l6 3 5-3v6l-6 3-5-2z" fill="#f5e36a"/><path d="M10 16l7-6v4h6v5h-6v4z" fill="#1f7fe0" stroke="#fff"/></symbol>
<symbol id="g-home" viewBox="0 0 24 24"><path d="M5 11h14v11H5z" fill="#fff" stroke="#555"/><path d="M12 2L1 13h3l8-8 8 8h3z" fill="#c22"/><path d="M10 13h5v9h-5z" fill="#38c"/><path d="M17 3h3v5h-3z" fill="#922"/></symbol>
<symbol id="g-rd" viewBox="0 0 24 24"><path d="M19 6A9 9 0 1 0 20 17" fill="none" stroke="#1230c8" stroke-width="3"/><path d="M23 1v9h-9z" fill="#1230c8"/><path d="M6 17l6-8 7 8z" fill="#7a4a1a"/><path d="M14 17l4-5 4 5z" fill="#393"/></symbol>
<symbol id="g-mz" viewBox="0 0 24 24"><path d="M0 4h8M4 0v8" stroke="#113a88" stroke-width="1.500"/><circle cx="13" cy="11" r="6" fill="#e8f2f0" stroke="#777" stroke-width="1.500"/><path d="M17 16l6 6" stroke="#8a8a6a" stroke-width="3.500"/></symbol>
<symbol id="g-hand" viewBox="0 0 24 24"><path d="M8 22L2 13l2-2 3 2L4 4l3-1 3 6-1-7 3-1 2 8 1-6 3 1 0 9 1-4 3 2-2 8-4 4z" fill="#f8c0a0" stroke="#a8502a"/></symbol>
<symbol id="g-rul" viewBox="0 0 24 24"><path d="M1 4h22M4 1L1 4l3 3M20 1l3 3-3 3" fill="none" stroke="#d22" stroke-width="2"/><path d="M1 10h22v11H1z" fill="#ffe070" stroke="#86601a"/><path d="M5 21v-5M9 21v-5M13 21v-5M17 21v-5" stroke="#86601a"/></symbol>
<symbol id="g-inf" viewBox="0 0 24 24"><circle cx="10" cy="10" r="9" fill="#2a9ae8" stroke="#158"/><path d="M10 4v3M8 9h2v7M7 16h6" stroke="#fff" stroke-width="2.500" fill="none"/><path d="M12 11l10 4-4 2 4 5-2 1-4-5-3 3z" fill="#ffef60" stroke="#d22"/></symbol>
<symbol id="g-prf" viewBox="0 0 24 24"><path d="M1 22V12l5-4 5 3 6-6 6 5v12z" fill="#f0ef88" stroke="#8a2"/><path d="M1 8l5-5 5 4 6-5 6 4" fill="none" stroke="#2ad" stroke-dasharray="2 2" stroke-width="2"/></symbol>
<symbol id="g-twr" viewBox="0 0 24 24"><path d="M6 23L11 9h2l5 14M8 18h8M9 14h6M8 18l8 5M16 18l-8 5" fill="none" stroke="#444" stroke-width="1.500"/><path d="M1 2l8 4M1 7l8-1M23 2l-8 4M23 7l-8-1M12 1v8" stroke="#e22" stroke-width="1.500"/></symbol>
<symbol id="g-pen" viewBox="0 0 24 24"><path d="M4 16L13 2l4 2-9 14-5 3z" fill="#f0b060" stroke="#94521a"/><path d="M6 21c8 2 6-8 13-8 6 2-2 10-5 9" fill="none" stroke="#c46a2a" stroke-width="1.500"/></symbol>
<symbol id="g-dn" viewBox="0 0 24 24"><path d="M3 7h18" stroke="#a8823a" stroke-width="2"/><path d="M3 11h18l-9 8z" fill="#b8924a"/></symbol>
<symbol id="g-bin" viewBox="0 0 24 24"><path d="M2 20L7 3h4v6h3V3h4l5 17h-7l-2-8h-3l-2 8z" fill="#222"/><path d="M2 17h6v5H2zM16 17h6v5h-6z" fill="#f4622a"/></symbol>
<symbol id="g-sun" viewBox="0 0 24 24"><path d="M0 0h24v24H0z" fill="#d8e070"/><path d="M0 4l9-4h8l7 6v6l-9-5-8 3-7 3z" fill="#4a6a2a"/><path d="M12 12l12-3v8z" fill="#8a6a3a"/><circle cx="7" cy="17" r="4" fill="#ff3" stroke="#e22"/><path d="M7 10v3M7 21v3M0 17h3M11 17h3M2 12l2 2M12 22l-2-2" stroke="#e22"/></symbol>
<symbol id="g-3d" viewBox="0 0 24 24"><path d="M6 18L14 7l9 1-3 12-10 3z" fill="#d8d890"/><path d="M8 20c2-8 8-12 13-10-2 5-6 3-7 11z" fill="#4a5a2a"/><path d="M15 18l6-6 1 5z" fill="#a8823a"/><path d="M1 1h4v3H2M5 4v4H1M8 1v7h1q3-1 3-3.500T9 1z" fill="none" stroke="#111"/></symbol>
<symbol id="g-23" viewBox="0 0 24 24"><path d="M1 1h4v3H1v4h4M8 1v7h1q3-1 3-3.500T9 1zM13 15h4v3h-3M17 18v4h-4M20 15v7h1q2-1 2-3.500T21 15z" fill="none" stroke="#283" stroke-width="1.500"/><path d="M9 13l3-6c5 1 7 4 1 7s-1 7 4 2" fill="none" stroke="#666" stroke-width="3"/></symbol>
<symbol id="g-fg" viewBox="0 0 24 24"><path d="M9 2v17M9 3l12 4-12 5z" fill="#aaa" stroke="#999" stroke-width="2"/><path d="M2 20h20M2 23h20" stroke="#aaa" stroke-dasharray="3 2"/></symbol>
<symbol id="g-scr" viewBox="0 0 24 24"><path d="M7 2l13 1v16l-13-2z" fill="#3a66b8" stroke="#222" stroke-width="2"/><path d="M10 5l8 1v10l-8-1z" fill="#bcdcff"/><path d="M2 10v2M2 14v7" stroke="#fb0" stroke-width="3"/></symbol>
<symbol id="g-sp" viewBox="0 0 24 24"><path d="M8 6v16M1 14h14M3 9l10 10M13 9L3 19" stroke="#aaa" stroke-dasharray="3 2" stroke-width="2"/><path d="M14 1v10M14 2l9 3-9 4z" fill="#999" stroke="#999"/></symbol>
<symbol id="d-area" viewBox="0 0 26 26"><path d="M3 24V15h6v3h6v-5h9v8h-4v3z" fill="#f4efa0" stroke="#1f82d6" stroke-width="1.500"/><use href="#pencil"/></symbol>
<symbol id="d-rect" viewBox="0 0 26 26"><path d="M3 14h9v10H3zM11 8h14v4H11z" fill="#f0f0a8" stroke="#4a9e4a"/><use href="#pencil"/></symbol>
<symbol id="d-rec0" viewBox="0 0 26 26"><path d="M3 14h9v10H3z" fill="none" stroke="#4a9e4a" stroke-width="1.500"/><path d="M11 8h14v4H11z" fill="#f0f0a8" stroke="#4a9e4a"/><use href="#pencil"/></symbol>
<symbol id="d-line" viewBox="0 0 26 26"><path d="M5 15h17M7 15v4h13M2 24h22M3 24v-3h9v-2" fill="none" stroke="#1f82d6" stroke-width="1.500"/><use href="#pencil"/></symbol>
<symbol id="d-free" viewBox="0 0 26 26"><path d="M4 17c9-5 5 5 10 0s-3-8 5-10 6 5 2 7 5 6-1 9-6-3-9 1-8 0-7-3" fill="none" stroke="#1f82d6" stroke-width="1.700"/><use href="#pencil"/></symbol>
<symbol id="d-cogo" viewBox="0 0 26 26"><path d="M2 17q6-3 12-2" fill="none" stroke="#28c"/><path d="M14 4h4v3h-3M18 7v4h-4M24 4h-3v7h3V8h-3" fill="none" stroke="#283" stroke-width="1.200"/><path d="M6 19H3v5h3M9 19h3v5H9zM18 19h-3v5h3v-2M21 19h3v5h-3z" fill="none" stroke="#e33" stroke-width="1.300"/><use href="#pencil"/></symbol>
<symbol id="d-ring" viewBox="0 0 26 26"><circle cx="9" cy="17" r="6" fill="none" stroke="#4a9e4a"/><circle cx="16" cy="13" r="7" fill="none" stroke="#38b"/><circle cx="20" cy="19" r="5" fill="none" stroke="#4a9e9e"/><use href="#pencil"/></symbol>
<symbol id="d-grid" viewBox="0 0 26 26"><path d="M13 4l12 11-11 10L2 15zM10 7l12 11M7 10l12 11M4 13l12 11M16 7L5 17M19 10L8 20M22 13L11 23" fill="none" stroke="#244"/><use href="#pencil"/></symbol>
<symbol id="d-pts" viewBox="0 0 26 26"><g stroke="#e33" stroke-width="3"><path d="M5 16h3M15 11h3M10 20h3M17 18h3M19 24h3"/></g><path d="M3 19h3M12 15h3M20 14h3M8 23h3" stroke="#24c" stroke-width="2"/><use href="#pencil"/></symbol>
<symbol id="d-node" viewBox="0 0 26 26"><path d="M2 17h22M15 12v8q0 3-4 1" fill="none" stroke="#111" stroke-width="1.700"/><use href="#pencil"/></symbol>
<symbol id="d-red" viewBox="0 0 26 26"><path d="M3 23l6-4 6-1 7-4-3-5-7 2" fill="none" stroke="#28c"/><path d="M3 23l6-4 6-1 7-4-3-5-7 2" fill="none" stroke="#e43" stroke-width="3" stroke-dasharray="3 3"/><use href="#pencil"/></symbol>
<symbol id="x1" viewBox="0 0 26 26"><use href="#gpen"/><path d="M2 17h8l3-3 3 3h9M4 21h20M6 25h16M12 12l10 8" stroke="#a0a0a0" stroke-width="2" fill="none"/></symbol>
<symbol id="x2" viewBox="0 0 26 26"><use href="#gpen"/><path d="M2 23c-2-7 7-9 9-4 0-9 7-11 9-6 8 5 6 12 0 12z" fill="#a0a0a0"/></symbol>
<symbol id="x3" viewBox="0 0 26 26"><path d="M4 13L13 2M2 17l8 6M12 21l11-17M23 4l-5 2M23 4v6" stroke="#a0a0a0" stroke-width="2" fill="none"/></symbol>
<symbol id="x4" viewBox="0 0 26 26"><circle cx="13" cy="14" r="10" fill="#ccc" stroke="#a0a0a0" stroke-width="3"/><path d="M8 20L20 4M6 12l8 8M13 5l-3 9" stroke="#999" stroke-width="3"/></symbol>
<symbol id="x5" viewBox="0 0 26 26"><use href="#gpen"/><path d="M3 20h6M6 17v6M7 19q8-9 12-2l4 7M10 15h6" stroke="#a0a0a0" stroke-width="2" fill="none"/></symbol>
<symbol id="x6" viewBox="0 0 26 26"><use href="#gpen"/><path d="M2 24c-1-8 6-11 10-5l6 5z" fill="#a0a0a0"/><path d="M15 5q8 0 8 9l-5-3M15 15q8-2 8 8h-4" fill="none" stroke="#a0a0a0" stroke-width="2"/></symbol>
<symbol id="x7" viewBox="0 0 26 26"><use href="#gpen"/><circle cx="18" cy="10" r="5" fill="#a0a0a0"/><path d="M2 20q4-7 8 0t8 0v-5M4 24h16" stroke="#a0a0a0" stroke-width="2" fill="none"/></symbol>
<symbol id="x8" viewBox="0 0 26 26"><use href="#gpen"/><circle cx="13" cy="14" r="3" fill="none" stroke="#a0a0a0" stroke-width="2"/><path d="M7 8q-5 8 2 14M19 5q6 9-2 14M3 22q7-2 3-9M22 24q-5-5 0-13" stroke="#a0a0a0" stroke-width="2" fill="none"/></symbol>
<symbol id="x9" viewBox="0 0 26 26"><use href="#gpen"/><path d="M15 5h8v8h-8zM3 16h7v7H3zM15 17h8v8h-8zM15 9h8M19 5v20M3 20h20M6 16v7" stroke="#a0a0a0" stroke-width="2" fill="#ddd"/></symbol>
<symbol id="x10" viewBox="0 0 26 26"><use href="#gpen"/><path d="M3 17h8v8H3zM16 19h8v6h-8z" fill="#a0a0a0"/><path d="M12 13q3-3 8-3 4-6-4-6" stroke="#a0a0a0" stroke-width="3" fill="none"/></symbol>
<symbol id="x11" viewBox="0 0 26 26"><use href="#gpen"/><path d="M5 24V11l7-8 12 2v12l-6 7z" fill="#a0a0a0"/></symbol>
<symbol id="x12" viewBox="0 0 26 26"><use href="#gpen"/><path d="M10 8h12v14H10z" fill="#a0a0a0"/><path d="M12 4h12M3 13h8v5H3v6h14M18 24h6" stroke="#a0a0a0" stroke-width="2" fill="none"/></symbol>
<symbol id="x13" viewBox="0 0 26 26"><use href="#gpen"/><path d="M2 20c0-6 7-4 11-8s12-3 12 4-7 9-12 9-11 0-11-5z" fill="#a0a0a0"/></symbol>
<symbol id="x14" viewBox="0 0 26 26"><use href="#gpen"/><path d="M14 10l8-7M22 3v6M22 3h-6M8 16l8 8" stroke="#a0a0a0" stroke-width="2" fill="none"/></symbol>
<symbol id="x15" viewBox="0 0 26 26"><use href="#gpen"/><path d="M3 22h19V6M18 10l4-5 4 5" stroke="#a0a0a0" stroke-width="2" fill="none"/></symbol>
<symbol id="x16" viewBox="0 0 26 26"><use href="#gpen"/><path d="M11 12c12-6 14 6 4 12M9 14l5 5" stroke="#a0a0a0" stroke-width="3" fill="none"/></symbol>
<symbol id="l-lv" viewBox="0 0 24 24"><path d="M2 1v8h4M8 1l3 8 3-8" fill="none" stroke="#111" stroke-width="2"/><path d="M12 23l-6-9 6 5 1-9 3 9 6-7-5 11z" fill="#5ab52e"/></symbol>
<symbol id="l-mv" viewBox="0 0 24 24"><path d="M6 17c0-6 6-9 10-7s9 1 7 7-17 6-17 0z" fill="#4caa22"/><path d="M15 20v4" stroke="#841" stroke-width="2"/><path d="M1 9V2l3 4 3-4v7M9 1l3 8 3-8" fill="none" stroke="#111" stroke-width="2"/></symbol>
<symbol id="l-hv" viewBox="0 0 24 24"><circle cx="16" cy="10" r="7" fill="#8cc63a"/><path d="M16 13v11M16 17l5-4" stroke="#a3611f" stroke-width="3"/><path d="M1 1v8M6 1v8M1 5h5M8 1l3 8 3-8" fill="none" stroke="#111" stroke-width="2"/></symbol>
<symbol id="l-b" viewBox="0 0 24 24"><path d="M4 14l6-4h12l2 4v9H4z" fill="#2a7fd0"/><path d="M3 14l8-5 5 5" fill="none" stroke="#d62" stroke-width="2"/><path d="M7 16h3v4H7zM15 16h3v7h-3z" fill="#fff"/><path d="M2 1h3q3 2 0 4 3 2 0 4H2zM2 5h3" fill="none" stroke="#111" stroke-width="2"/></symbol>
<symbol id="l-p" viewBox="0 0 24 24"><path d="M15 2v8L11 23M15 10l5 13M10 6h12M9 11h14M12 18h8M5 14L2 23M5 14l3 9" fill="none" stroke="#d55" stroke-width="1.500"/><path d="M2 10V1h3q3 2 0 5H2" fill="none" stroke="#111" stroke-width="2"/></symbol>
<symbol id="l-w" viewBox="0 0 24 24"><path d="M2 14h20q-2 9-10 9T2 14z" fill="#114a8a"/><path d="M18 3q5 7 0 9-5-2 0-9z" fill="#2a9ae0"/><path d="M1 1l2 8 3-7 3 7 2-8" fill="none" stroke="#111" stroke-width="2"/></symbol>
<symbol id="l-ag" viewBox="0 0 24 24"><path d="M1 22q9-11 17 0z" fill="#b5653a"/><use href="#wand"/><path d="M1 9l3-8 3 8M2 6h4M14 2h-4v7h4V6h-2" fill="none" stroke="#111" stroke-width="1.500"/></symbol>
<symbol id="l-ac" viewBox="0 0 24 24"><path d="M2 14h9v9H2z" fill="#28b"/><path d="M9 12l7-3 1 10-6 4z" fill="#4a4"/><path d="M1 14l5-4 5 4" stroke="#d52" fill="none" stroke-width="2"/><use href="#wand"/><path d="M1 9l3-8 3 8M2 6h4M14 2h-4v7h4" fill="none" stroke="#111" stroke-width="1.500"/></symbol>
<symbol id="l-y" viewBox="0 0 24 24"><path d="M2 5l14-3 2 17-15 3z" fill="#fde93a" stroke="#c90" stroke-width="2"/><use href="#wand"/></symbol>
<symbol id="l-cl" viewBox="0 0 24 24"><path d="M9 2h6v5H9z" fill="#28a"/><path d="M9 8h6v8H9z" fill="#333"/><path d="M9 17h6v5H9z" fill="#3a4"/><path d="M1 4l6 6M7 10V5M1 20l6-6M7 14v5" stroke="#222" stroke-width="2"/><path d="M18 8v8l6-4z" fill="#222"/></symbol>
<symbol id="l-dt" viewBox="0 0 24 24"><path d="M2 3h18" stroke="#e22" stroke-width="4" stroke-dasharray="4 2"/><path d="M2 9h18" stroke="#c2c" stroke-width="4" stroke-dasharray="4 2"/><path d="M2 15h18" stroke="#24c" stroke-width="4" stroke-dasharray="4 2"/><path d="M2 21h22M22 1v22" stroke="#111" stroke-width="4" stroke-dasharray="4 2"/></symbol>
<symbol id="min" viewBox="0 0 14 12"><path d="M1.500 6.500h11v3h-11z" fill="#fff" stroke="#4d5866"/></symbol>
<symbol id="max" viewBox="0 0 14 12"><path d="M1.500 1.500h11v9h-11z" fill="#fff" stroke="#4d5866"/><path d="M4.500 4.500h5v3h-5z" fill="none" stroke="#4d5866"/></symbol>
<symbol id="cls" viewBox="0 0 14 12"><path d="M2 1h3l2 2.500L9 1h3L9 6l3 5H9L7 8.500 5 11H2l3-5z" fill="#fff" stroke="#4d5866"/></symbol>
<symbol id="up" viewBox="0 0 25 25"><path d="M12.500 3L4 12h5v10h7V12h5z" fill="#1488c8" stroke="#0b4a78"/><path d="M12 8v13" stroke="#34f" stroke-width="2"/></symbol>
<symbol id="ck" viewBox="0 0 22 22"><path d="M7 11l3 4 5-9" fill="none" stroke="#1a1a9a" stroke-width="2"/></symbol>
</svg>

<main class="desk position-relative flex-grow-1 d-flex flex-column">
  <header class="mm-title d-flex align-items-center">
    <svg class="ic me-1"><use href="#mm"/></svg><span>MapMatrix 4.2 - [起始页]</span>
    <div class="ctl d-flex ms-auto me-1 align-self-start"><button><svg width="14" height="12"><use href="#min"/></svg></button><button><svg width="14" height="12"><use href="#max"/></svg></button><button><svg width="14" height="12"><use href="#cls"/></svg></button></div>
  </header>
  <nav class="mm-menu d-flex align-items-center"><span class="grip"></span><a href="#">文件(<u>F</u>)</a><a href="#">视图(<u>V</u>)</a><a href="#">工具(<u>T</u>)</a><a href="#">窗口(<u>W</u>)</a><a href="#">帮助(<u>H</u>)</a></nav>
  <div class="mm-tools d-flex align-items-center"><span class="grip"></span>
    <button><svg class="ic"><use href="#fnew"/></svg></button><button><svg class="ic"><use href="#opy"/></svg></button><button class="on"><svg class="ic"><use href="#ham"/></svg></button><button class="on"><svg class="ic"><use href="#tools"/></svg></button><button class="on"><svg class="ic"><use href="#props"/></svg></button><button><svg class="ic"><use href="#cam"/></svg></button><button><svg class="ic"><use href="#car"/></svg></button><button><svg class="ic"><use href="#car"/></svg></button><button><svg class="ic"><use href="#stop"/></svg></button><button><svg class="ic"><use href="#wf"/></svg></button><button><svg class="ic"><use href="#wb"/></svg></button><button><svg class="ic"><use href="#tee"/></svg></button><button><svg class="ic"><use href="#qy"/></svg></button><span class="trd mt-2"></span>
  </div>
  <div class="d-flex flex-grow-1">
    <section class="mm-left d-flex flex-column">
      <div class="pane-head d-flex justify-content-between align-items-center"><span>工程浏览窗口</span><svg width="9" height="9"><path d="M1 1l7 7M8 1L1 8" stroke="#000" stroke-width="1.500"/></svg></div>
      <div class="mm-left-tools d-flex align-items-center"><span class="trd me-2"></span><svg class="ic"><use href="#fspark"/></svg></div>
      <div class="bg-white flex-grow-1"></div>
    </section>
    <section class="mm-center d-flex flex-column flex-grow-1">
      <div class="mm-tabs d-flex align-items-center"><a href="#" class="mm-tab fw-bold">起始页</a>
        <svg class="ms-auto" width="40" height="12"><path d="M6 2v8L2 6zM18 2v8l4-4z" fill="#fff" stroke="#6a8a10"/><path d="M31 2l7 8M38 2l-7 8" stroke="#6a8a10" stroke-width="2"/></svg></div>
      <div class="mm-page flex-grow-1"><svg class="banner" viewBox="0 0 1024 60" preserveAspectRatio="none"><defs><linearGradient id="sky"><stop stop-color="#4cbdf0"/><stop offset=".2" stop-color="#72dcf2"/><stop offset=".45" stop-color="#b6e8f8"/><stop offset=".7" stop-color="#c8eefa"/><stop offset="1" stop-color="#9cdcf8"/></linearGradient></defs><path d="M0 0h1024v60H0z" fill="url(#sky)"/><path d="M150 19c40-14 90-8 110-4l70 5h50l-50-8 60 5-60-12-90-4-90 10zM320 4l100 3-40 8zM820 22l50-14 40-8h60l-50 12-30 14z" fill="#8fd6f2"/><circle cx="722" cy="18" r="8" fill="#fff"/><path d="M920 22l40-20h20l-30 18z" fill="#d5f4fb"/></svg></div>
    </section>
    <section class="mm-right d-flex flex-column">
      <div class="pane-head d-flex justify-content-between align-items-center"><span>对象属性</span><svg width="9" height="9"><path d="M1 1l7 7M8 1L1 8" stroke="#000" stroke-width="1.500"/></svg></div>
      <div class="bg-white flex-grow-1 d-flex"><div class="w-50 border-end"></div></div>
      <div class="mm-note mt-1 mb-1"></div>
    </section>
  </div>
  <footer class="status">就绪</footer>

  <!-- UltraEdit -->
  <section class="win w-ue d-flex flex-column">
    <div class="win-title d-flex align-items-center flex-shrink-0"><svg class="ic me-1"><use href="#ue"/></svg><span>UltraEdit</span><div class="ctl d-flex ms-auto align-self-start"><button><svg width="14" height="12"><use href="#min"/></svg></button><button><svg width="14" height="12"><use href="#max"/></svg></button><button><svg width="14" height="12"><use href="#cls"/></svg></button></div></div>
    <div class="win-body ue flex-grow-1 d-flex flex-column">
      <nav class="ue-menu d-flex align-items-center flex-shrink-0"><a href="#">文件(F)</a><a href="#">编辑(E)</a><a href="#">搜索(S)</a><a href="#">插入(N)</a><a href="#">工程(P)</a><a href="#">视图(V)</a><a href="#">格式(T)</a><a href="#">列(L)</a><a href="#">宏(M)</a><a href="#">脚本(I)</a><a href="#">高级(A)</a><a href="#">窗口(W)</a><a href="#">帮助(H)</a></nav>
      <div class="ue-tools d-flex align-items-center flex-shrink-0">
        <button><svg class="ic"><use href="#fl"/></svg></button><button><svg class="ic"><use href="#al"/></svg></button><button><svg class="ic"><use href="#ar"/></svg></button><button><svg class="ic"><use href="#doc"/></svg></button><button><svg class="ic"><use href="#fb"/></svg></button><button><svg class="ic"><use href="#fb2"/></svg></button><button><svg class="ic"><use href="#sv"/></svg></button><button><svg class="ic"><use href="#sva"/></svg></button><span class="vr1"></span>
        <button><svg class="ic"><use href="#prn"/></svg></button><button><svg class="ic"><use href="#prv"/></svg></button><button><svg class="ic"><use href="#fa"/></svg></button><span class="vr1"></span>
        <button><svg class="ic"><use href="#lc"/></svg></button><span class="vr1"></span><button><svg class="ic"><use href="#lg"/></svg></button><span class="vr1"></span><button><svg class="ic"><use href="#hx"/></svg></button><span class="vr1"></span><button><svg class="ic"><use href="#cl"/></svg></button><span class="vr1"></span><button><svg class="ic"><use href="#ln"/></svg></button><span class="vr1"></span>
        <button><svg class="ic"><use href="#uc"/></svg></button><button><svg class="ic"><use href="#uf"/></svg></button><button><svg class="ic"><use href="#us"/></svg></button><span class="vr1"></span>
        <button><svg class="ic"><use href="#cut"/></svg></button><button><svg class="ic"><use href="#cpy"/></svg></button><button><svg class="ic"><use href="#pst"/></svg></button><span class="vr1"></span>
        <button><svg class="ic"><use href="#bn"/></svg></button><button><svg class="ic"><use href="#bl"/></svg></button><button><svg class="ic"><use href="#br"/></svg></button><button><svg class="ic"><use href="#bk"/></svg></button><button><svg class="ic"><use href="#hl"/></svg></button><button><svg class="ic"><use href="#fi"/></svg></button><span class="vr1"></span>
        <button><svg class="ic"><use href="#tx"/></svg></button><button><svg class="ic"><use href="#tx"/></svg></button><button><svg class="ic"><use href="#tx"/></svg></button><button><svg class="ic"><use href="#ln"/></svg></button><span class="vr1"></span>
        <button><svg class="ic"><use href="#w2"/></svg></button><button><svg class="ic"><use href="#w2v"/></svg></button><button><svg class="ic"><use href="#w3"/></svg></button><span class="vr1"></span>
        <button><svg class="ic"><use href="#glb"/></svg></button><button><svg class="ic"><use href="#ww"/></svg></button><button><svg class="ic"><use href="#rf"/></svg></button><span class="vr1"></span>
        <button><svg class="ic"><use href="#blb"/></svg></button><button><svg class="ic"><use href="#hp"/></svg></button><span class="more ms-1"><svg width="8" height="20"><use href="#dbl"/></svg></span><span class="dots ms-1 me-0"></span>
        <button><svg class="ic"><use href="#lr"/></svg></button><button><svg class="ic" viewBox="0 0 16 16"><path d="M0 0h16v16H0z" fill="#222"/><text x="8" y="13" font-family="Liberation Serif" font-weight="bold" font-size="14" fill="#fff" text-anchor="middle">B</text></svg></button><button><svg class="ic" viewBox="0 0 16 16"><path d="M0 0h16v16H0z" fill="#222"/><text x="8" y="13" font-family="Liberation Serif" font-style="italic" font-size="14" fill="#fff" text-anchor="middle">I</text></svg></button><button><svg class="ic" viewBox="0 0 16 16"><path d="M0 0h16v16H0z" fill="#222"/><text x="8" y="12" font-family="Liberation Serif" font-size="13" fill="#fff" text-anchor="middle">U</text><path d="M3 14h10" stroke="#fff"/></svg></button><button><svg class="ic"><use href="#cd"/></svg></button>
        <span class="more ms-2"><svg width="8" height="20"><use href="#dbl"/></svg></span><span class="dots ms-1 me-4"></span><span class="more m-0"><svg width="8" height="20"><use href="#dbl"/></svg></span><span class="dots ms-1 me-4"></span><span class="more m-0"><svg width="8" height="20"><use href="#dbl"/></svg></span><span class="dots ms-1"></span><span class="more"><svg width="8" height="20"><use href="#dbl"/></svg></span>
      </div>
      <div class="ue-main d-flex flex-grow-1">
        <aside class="ue-side d-flex flex-column">
          <div class="ue-head d-flex align-items-center flex-shrink-0"><span>文件视图</span><svg class="ms-auto" width="46" height="12"><path d="M1 4h9L5.500 9z" fill="#fff"/><path d="M20 1h5v6h-5zM18 7h9M22.500 7v5" fill="none" stroke="#fff"/><path d="M37 2l8 8M45 2l-8 8" stroke="#fff" stroke-width="1.500"/></svg></div>
          <div class="ue-tabs d-flex flex-shrink-0"><a href="#">打开</a><a href="#" class="on">资源管理器</a><a href="#" class="pe-0 flex-grow-1 text-nowrap">列表</a><button class="nudge"><i class="trl"></i></button><button class="nudge"><i class="trr"></i></button></div>
          <div class="ue-filter d-flex align-items-center flex-shrink-0"><label for="flt" class="me-1 flex-grow-1">筛选:</label><input id="flt" value="*.*"><button><svg width="14" height="14"><use href="#fo"/></svg></button></div>
          <div class="d-flex flex-shrink-0"><nav class="ue-tree flex-grow-1">
            <a href="#"><svg class="plus"><use href="#plusbox"/></svg><svg class="ic me-1"><use href="#drv"/></svg>C:</a><a href="#"><svg class="plus"><use href="#plusbox"/></svg><svg class="ic me-1"><use href="#drv"/></svg>D:</a><a href="#"><svg class="plus"><use href="#plusbox"/></svg><svg class="ic me-1"><use href="#drv"/></svg>E:</a><a href="#"><svg class="plus"><use href="#plusbox"/></svg><svg class="ic me-1"><use href="#drv"/></svg>F:</a><a href="#"><svg class="plus"><use href="#plusbox"/></svg><svg class="ic me-1"><use href="#drv"/></svg>H:</a><a href="#"><svg class="plus"><use href="#plusbox"/></svg><svg class="ic me-1"><use href="#net"/></svg>网络</a><a href="#"><svg class="plus"><use href="#plusbox"/></svg><svg class="ic me-1"><use href="#ftp"/></svg>FTP 帐号</a></nav>
            <div class="ue-vs d-flex justify-content-center pt-1"><span class="sbtn"><i class="tru"></i></span></div></div>
          <div class="ue-hs d-flex align-items-center justify-content-between flex-shrink-0"><span class="sbtn"><i class="trl"></i></span><span class="sbtn me-3"><i class="trr"></i></span></div>
          <div class="ue-cols d-flex border-top flex-shrink-0"><span class="w-50 border-end border-secondary d-flex justify-content-between align-items-center pe-2">名称<svg width="7" height="5"><path d="M0 4h7L3.500 0z" fill="#fff"/></svg></span><span>修改日期</span></div>
          <div class="flex-grow-1"></div>
          <div class="ue-hs d-flex align-items-center flex-shrink-0"><span class="sbtn"><i class="trl"></i></span><span class="sbtn long ms-1"></span></div>
        </aside>
        <div class="flex-grow-1 ms-1 ue-view"></div>
      </div>
      <div class="ue-status flex-shrink-0">如需帮助, 请按 F1</div>
    </div>
  </section>

  <!-- Explorer -->
  <section class="win w-ex d-flex flex-column">
    <div class="ex-nav d-flex align-items-center flex-shrink-0">
      <svg width="69" height="28"><path d="M14 1h28a13 13 0 0 1 0 26H14z" fill="#b7c4d3" opacity=".6"/><circle cx="14" cy="14" r="12" fill="url(#ball)" stroke="#4a5a70"/><path d="M6 14l7-6v4h8v4h-8v4z" fill="#fff"/><circle cx="42" cy="14" r="12" fill="#d0d9e3" stroke="#76828f"/><path d="M50 14l-7-6v4h-8v4h8v4z" fill="#eef2f6"/><path d="M58 12h9l-4 5z" fill="#2a7ab0"/></svg>
      <div class="addr flex-grow-1 d-flex align-items-center"><svg class="ic me-2"><use href="#fld"/></svg><span class="tri ms-1"></span><span>计算机</span><span class="tri"></span><span>本地磁盘 (D:)</span><span class="tri"></span><span>0</span></div>
    </div>
    <div class="win-body flex-grow-1 d-flex flex-column bg-white">
      <div class="ex-bar d-flex align-items-center flex-shrink-0"><button class="d-flex align-items-center gap-2">组织 <i class="trd"></i></button><button class="d-flex align-items-center gap-1 ms-4 ps-1"><svg class="ic"><use href="#np"/></svg>打开 <i class="trd ms-2"></i></button><button class="ms-4 ps-1">新建文件夹</button></div>
      <div class="d-flex flex-grow-1" style="min-height:0">
        <nav class="ex-tree d-flex flex-column"><a href="#"><svg class="ic"><use href="#star"/></svg>收藏夹</a><a href="#" class="sub"><svg class="ic"><use href="#dl"/></svg>下载</a><a href="#" class="sub"><svg class="ic"><use href="#dsk"/></svg>桌面</a><a href="#" class="sub"><svg class="ic"><use href="#rec"/></svg>最近访问的位置</a>
          <a href="#" class="mt-4"><svg class="ic"><use href="#lib"/></svg>库</a><a href="#" class="sub"><svg class="ic"><use href="#vid"/></svg>视频</a><a href="#" class="sub"><svg class="ic"><use href="#pic"/></svg>图片</a><a href="#" class="sub"><svg class="ic"><use href="#dcm"/></svg>文档</a><a href="#" class="sub"><svg class="ic"><use href="#mus"/></svg>音乐</a>
          <a href="#" class="mt-4"><svg class="ic"><use href="#pc"/></svg>计算机</a><a href="#" class="sub"><svg class="ic"><use href="#drw"/></svg>本地磁盘 (C:)</a><a href="#" class="sub sel"><svg class="ic"><use href="#drv"/></svg>本地磁盘 (D:)</a><a href="#" class="sub"><svg class="ic"><use href="#drv"/></svg>本地磁盘 (E:)</a><a href="#" class="sub"><svg class="ic"><use href="#drv"/></svg>新加卷 (F:)</a><a href="#" class="sub"><svg class="ic"><use href="#drv"/></svg>yc (H:)</a>
          <a href="#" class="mt-4"><svg class="ic"><use href="#net"/></svg>网络</a></nav>
        <div class="ex-scroll d-flex flex-column align-items-center justify-content-between"><i class="tru mt-2"></i><div class="ex-thumb d-flex flex-column justify-content-center align-items-center"><svg width="8" height="8"><path d="M0 1h8M0 4h8M0 7h8" stroke="#666"/></svg></div><i class="trd mb-2 mt-3"></i></div>
        <div class="ex-list flex-grow-1"><div class="ex-col">名称</div><a href="#" class="ex-item d-flex align-items-center gap-1"><svg class="ic"><use href="#npd"/></svg>111.dem</a></div>
      </div>
      <div class="ex-det d-flex flex-shrink-0"><svg width="32" height="41" class="me-3"><use href="#npd"/></svg><div class="ms-1"><div class="text-black">111.dem</div><div>DEM 文件</div></div><div class="text-end mx-2"><div>修改日期:</div><div>大小:</div></div><b>2016/6/2 14:41<br>90.2 MB</b></div>
    </div>
  </section>

  <!-- Word -->
  <section class="win w-wo"><div class="ctl d-flex float-end"><button><svg width="14" height="12"><use href="#min"/></svg></button><button><svg width="14" height="12"><use href="#max"/></svg></button><button><svg width="14" height="12"><use href="#cls"/></svg></button></div></section>
  <section class="win w-wi d-flex flex-column">
    <div class="win-title d-flex align-items-center flex-shrink-0"><span class="wd-name">- Microsoft Word</span><div class="ctl d-flex ms-auto align-self-start"><button><svg width="14" height="12"><use href="#min"/></svg></button><button><svg width="14" height="12"><use href="#max"/></svg></button><button><svg width="14" height="12"><use href="#cls"/></svg></button></div></div>
    <div class="win-body flex-grow-1 d-flex flex-column">
      <div class="wd-tab d-flex align-items-center justify-content-end flex-shrink-0"><svg width="14" height="14"><use href="#hp"/></svg></div>
      <div class="wd-rib d-flex gap-1 flex-shrink-0">
        <div class="wd-grp flex-grow-1 d-flex flex-column justify-content-between"><div class="d-flex justify-content-end pt-1">
          <div class="gal d-flex align-items-center"><a href="#" class="cur"><span>AaBbCcDd</span><small>↲ 正文</small></a><a href="#"><span>AaBbCcDd</span><small>↲ 无间隔</small></a><a href="#" class="big"><b>AaBb</b><small>标题 1</small></a><div class="gsc"><span><i class="tru"></i></span><span><i class="trd"></i></span><span><i class="trd"></i></span></div></div>
          <button class="d-flex flex-column align-items-center px-1"><svg width="32" height="30" viewBox="0 0 32 30"><path d="M2 18L9 2l6 16M5 12h8" fill="none" stroke="#b04ab8" stroke-width="3"/><path d="M10 28L19 7l9 21M14 21h10" fill="none" stroke="#3f7fd4" stroke-width="4"/></svg><span class="my-1">更改样式</span><i class="trd mt-1"></i></button></div>
          <div class="cap d-flex"><span class="ms-auto cap-name">样式</span><svg width="16" height="20"><path d="M3 6v7M3 6h7M6 9h6v6H6z" fill="none" stroke="#5a83b5"/></svg></div></div>
        <div class="wd-grp wd-edit d-flex flex-column align-items-center pt-1"><button class="edbtn d-flex justify-content-center pt-1"><svg class="ic"><path d="M1 14V8l2-6h3v5h4V2h3l2 6v6h-5v-4H6v4z" fill="#cfdff2" stroke="#27497e"/></svg></button><span class="mt-1">编辑</span><i class="trd mt-2"></i></div>
      </div>
      <div class="wd-doc flex-grow-1 d-flex" style="min-height:0">
        <div class="wd-gl"></div>
        <div class="wd-page flex-grow-1 d-flex justify-content-end"><div class="shot"><button class="xred ms-auto"><svg width="14" height="12"><use href="#cls"/></svg></button><div class="shot-body d-flex justify-content-end gap-2"><div class="shot-list"><div></div></div><div><button><svg width="23" height="23"><use href="#up"/><path d="M0 1h23" stroke="#06a" stroke-width="3"/></svg></button><button><svg width="23" height="23"><use href="#up"/></svg></button><button><svg width="23" height="23"><g transform="rotate(180 11.500 11.500)"><use href="#up"/></g></svg></button><button><svg width="23" height="23"><g transform="rotate(180 11.500 11.500)"><use href="#up"/><path d="M0 1h23" stroke="#06a" stroke-width="3"/></g></svg></button></div></div></div><span class="text-secondary wd-ret">↵</span></div>
        <div class="wd-gr mt-2"></div>
        <div class="wd-vs d-flex flex-column align-items-center"><svg width="12" height="26"><path d="M2 8h10" stroke="#235" stroke-width="2"/><path d="M1 14h5v3h5v7H6v-3H1z" fill="#fff" stroke="#555"/></svg>
          <div class="wd-track flex-grow-1 d-flex flex-column align-items-center"><i class="tru mt-2 mb-auto"></i><div class="wd-thumb d-flex align-items-center justify-content-center"><svg width="8" height="8"><path d="M0 1h8M0 4h8M0 7h8" stroke="#456"/></svg></div><i class="trd mb-2 mt-5"></i></div>
          <svg width="12" height="50"><path d="M2 8l4-4 4 4zM2 12l4-4 4 4zM3 12h6M2 38h8l-4 4zM2 42h8l-4 4z"/><circle cx="6" cy="25" r="3.500" fill="#ccc" stroke="#333"/></svg></div>
      </div>
      <div class="wd-hs d-flex align-items-center flex-shrink-0"><i class="trl ms-2 me-3"></i><div class="wd-hth flex-grow-1 ms-1"></div><i class="trr ms-3 me-1"></i><div class="wd-corner ms-2"></div></div>
      <div class="wd-foot flex-shrink-0"></div>
    </div>
  </section>

  <!-- Global Mapper -->
  <section class="win w-gm d-flex flex-column">
    <div class="win-title d-flex align-items-center flex-shrink-0"><svg class="ic me-1"><use href="#gma"/></svg><span>Global Mapper v16.2 (b051815) [64-bit] [+OTF] [+Lidar] - [中文注册版]</span><div class="ctl d-flex ms-auto align-self-start"><button><svg width="14" height="12"><use href="#min"/></svg></button><button><svg width="14" height="12"><use href="#max"/></svg></button><button><svg width="14" height="12"><use href="#cls"/></svg></button></div></div>
    <div class="win-body gm flex-grow-1 d-flex flex-column">
      <nav class="gm-menu d-flex align-items-center flex-shrink-0"><a href="#">文件(F)</a><a href="#">编辑(E)</a><a href="#">视图(W)</a><a href="#">工具(T)</a><a href="#">分析(A)</a><a href="#">查找(S)</a><a href="#">GPS(G)</a><a href="#">帮助(H)</a></nav>
      <div class="gm-row d-flex flex-shrink-0"><div class="gm-strip d-flex align-items-center flex-shrink-0">
        <button class="gb"><svg><use href="#g-open"/></svg></button><button class="gb"><svg><use href="#g-save"/></svg></button><button class="gb"><svg><use href="#glb"/></svg></button><button class="gb"><svg><use href="#g-lay"/></svg></button><button class="gb"><svg><use href="#g-3l"/></svg></button><button class="gb"><svg><use href="#g-tool"/></svg></button><span class="gv"></span>
        <button class="gb"><svg><use href="#g-zi"/></svg></button><button class="gb"><svg><use href="#g-zo"/></svg></button><button class="gb"><svg><use href="#g-fv"/></svg></button><button class="gb"><svg><use href="#g-home"/></svg></button><button class="gb"><svg><use href="#g-rd"/></svg></button><span class="gv"></span>
        <button class="gb on"><svg><use href="#g-mz"/></svg></button><button class="gb"><svg><use href="#g-hand"/></svg></button><button class="gb"><svg><use href="#g-rul"/></svg></button><button class="gb"><svg><use href="#g-inf"/></svg></button><button class="gb"><svg><use href="#g-prf"/></svg></button><button class="gb"><svg><use href="#g-twr"/></svg></button><button class="gb"><svg><use href="#g-pen"/></svg></button><button class="gb"><svg><use href="#g-dn"/></svg></button><span class="gs"></span><button class="gb"><svg><use href="#g-bin"/></svg></button><span class="gv"></span>
        <div class="dd dd-a plain ms-1 me-2"><select aria-label="着色"><option>Atlas渲染着色</option></select><i><b class="trd"></b></i></div>
        <button class="gb on"><svg><use href="#g-sun"/></svg></button><button class="gb"><svg><use href="#g-3d"/></svg></button><button class="gb on"><svg><use href="#g-23"/></svg></button><span class="gv"></span>
        <button class="gb"><svg><use href="#g-fg"/></svg></button><button class="gb"><svg><use href="#g-scr"/></svg></button><button class="gb"><svg><use href="#g-sp"/></svg></button><span class="gv"></span>
        <div class="dd dd-c plain ms-1"><select aria-label="收藏夹"><option>设置收藏夹列表...</option></select></div></div></div>
      <div class="gm-row d-flex flex-shrink-0"><div class="gm-strip tall d-flex align-items-center">
        <button class="gb"><svg><use href="#d-area"/></svg></button><button class="gb"><svg><use href="#d-rect"/></svg></button><span class="gs"></span><button class="gb"><svg><use href="#d-line"/></svg></button><button class="gb"><svg><use href="#d-free"/></svg></button><button class="gb"><svg><use href="#d-rec0"/></svg></button><button class="gb"><svg><use href="#d-cogo"/></svg></button><button class="gb"><svg><use href="#d-ring"/></svg></button><button class="gb"><svg><use href="#d-grid"/></svg></button><span class="gs"></span><button class="gb"><svg><use href="#d-pts"/></svg></button><button class="gb"><svg><use href="#d-node"/></svg></button><span class="gs"></span>
        <button class="gb"><svg><use href="#d-red"/></svg></button><button class="gb"><svg><use href="#x1"/></svg></button><button class="gb"><svg><use href="#x2"/></svg></button><button class="gb"><svg><use href="#x3"/></svg></button><button class="gb"><svg><use href="#x4"/></svg></button><button class="gb"><svg><use href="#x5"/></svg></button><button class="gb"><svg><use href="#x6"/></svg></button><button class="gb"><svg><use href="#x7"/></svg></button><button class="gb"><svg><use href="#x8"/></svg></button><button class="gb"><svg><use href="#x9"/></svg></button><button class="gb"><svg><use href="#x10"/></svg></button><button class="gb"><svg><use href="#x11"/></svg></button><button class="gb"><svg><use href="#x12"/></svg></button><button class="gb"><svg><use href="#x13"/></svg></button><span class="gs"></span><button class="gb"><svg><use href="#x14"/></svg></button><button class="gb"><svg><use href="#x15"/></svg></button><button class="gb"><svg><use href="#x16"/></svg></button></div></div>
      <div class="gm-row d-flex flex-shrink-0"><div class="gm-strip d-flex align-items-center border-bottom-0">
        <div class="dd dd-b plain ms-1 me-2"><select aria-label="激光雷达"><option>彩色激光雷达RGB/Elev</option></select><i><b class="trd"></b></i></div>
        <button class="gb"><svg><use href="#l-lv"/></svg></button><button class="gb"><svg><use href="#l-mv"/></svg></button><button class="gb"><svg><use href="#l-hv"/></svg></button><button class="gb"><svg><use href="#l-b"/></svg></button><button class="gb"><svg><use href="#l-p"/></svg></button><button class="gb"><svg><use href="#l-w"/></svg></button><span class="gs"></span><button class="gb"><svg><use href="#l-ag"/></svg></button><button class="gb"><svg><use href="#l-ac"/></svg></button><button class="gb"><svg><use href="#l-y"/></svg></button><span class="gs"></span><button class="gb"><svg><use href="#l-cl"/></svg></button><button class="gb"><svg><use href="#l-dt"/></svg></button></div></div>
      <div class="gm-map flex-grow-1">
        <svg viewBox="487 379 996 571" preserveAspectRatio="xMinYMin slice">
          <defs>
            <clipPath id="area"><path d="M870 378L861 386 829 427 795 480 792 500 788 540 792 560 811 611 832 661 857 714 889 781 903 813 920 840 928 850 945 861 962 854 985 840 1100 782V426L924 378z"/></clipPath>
            <filter id="relief" x="780" y="370" width="330" height="500" filterUnits="userSpaceOnUse" color-interpolation-filters="sRGB">
              <feGaussianBlur in="SourceGraphic" stdDeviation="3" result="s"/>
              <feTurbulence type="fractalNoise" baseFrequency=".06 .045" numOctaves="3" seed="8" result="n0"/>
              <feDisplacementMap in="s" in2="n0" scale="26" xChannelSelector="R" yChannelSelector="G" result="h"/>
              <feColorMatrix in="n0" values="0 0 0 1 0 0 0 0 1 0 0 0 0 1 0 0 0 0 0 1" result="n"/>
              <feComposite in="h" in2="n" operator="arithmetic" k1=".500" k2=".75"/>
              <feColorMatrix values="1 0 0 0 0 0 1 0 0 0 0 0 1 0 0 0 0 0 0 1"/>
              <feComponentTransfer><feFuncR type="table" tableValues="0 0 0 0 .5 1 1 1 .95"/><feFuncG type="table" tableValues="0 .9 1 1 1 .95 .65 .4 .2"/><feFuncB type="table" tableValues="1 1 .55 0 0 0 0 0 0"/></feComponentTransfer>
            </filter>
            <linearGradient id="ramp" x2="0" y2="1"><stop stop-color="#f00"/><stop offset=".54" stop-color="#ff0"/><stop offset=".8" stop-color="#0f0"/><stop offset=".87" stop-color="#00ff90"/><stop offset=".93" stop-color="#0ff"/><stop offset="1" stop-color="#00f"/></linearGradient>
          </defs>
          <g clip-path="url(#area)">
            <g filter="url(#relief)">
              <path d="M770 360h350v520H770z" fill="#474747"/>
              <path d="M840 680L1110 600v280H870z" fill="#515151"/>
              <path d="M835 400l50-40h220v60l-60 20-10 60-60 30-60-10-80-10-60 20z" fill="#606060"/>
              <g fill="none" stroke="#a6a6a6" stroke-width="16" stroke-linecap="round" stroke-linejoin="round"><path d="M885 380l-8 30-36 24M877 410l-12 40-30 26M865 450l-8 40-24 24M895 400l-4 50-18 60M891 450l-10 70M910 390l4 50-8 60M914 440l14 60-4 40M905 430l-14 50-6 50M925 470l24 34M880 384h40M838 505l16 14"/></g>
              <g fill="none" stroke="#a6a6a6" stroke-width="11" stroke-linecap="round"><path d="M936 386l14 24 30 4M950 400l10 36 26 8M960 420l-2 30 28 20M966 450l8 30M1018 444l2 40M1018 450l30 10M1046 470l24 10M976 402l26 12M1020 470l22 18"/></g>
              <g fill="none" stroke="#d6d6d6" stroke-width="7" stroke-linecap="round"><path d="M880 384l20 6M876 396l-4 16M858 428l8-8M868 456l-4 14M890 440l10-20M912 470l2 36M928 462l2 12M915 500l-8 14M945 400l-2 12M886 490l-4 10M846 514l8 2M880 528l4-6M1022 474l4 4M968 480l6 6"/></g>
              <g fill="#808080"><path d="M1058 760l20-8v36l-20 4z"/><path d="M975 800l30-4-4 16-26 4zM1030 788l14-6 4 26-14 4zM903 795l12 6v20zM955 830l40-8-8 14z"/></g><circle cx="921" cy="838" r="5" fill="#ccc"/>
            </g>
            <g fill="none" stroke="#08e850" stroke-width="1.500"><path d="M792 505l40 62 14 60 44 70 24 22M836 567l20-32 60 6M845 600l-35 20M850 655l60-12M900 702l-22 20M812 545l24-22h86M880 690l16-40 28-6M940 730l110-30M960 760l112-26M965 800l100-60M985 820l80-50M870 595h50M872 605h48M872 615h46M874 625h44"/></g>
            <path d="M804 512l28 52 12 36 4 28 14 28 22 34 24 24" fill="none" stroke="#00f0b8" stroke-width="7"/><path d="M838 578l22-16 62-3M842 560l30-12 48 6M796 548l18 30 30 30" fill="none" stroke="#00f8a8" stroke-width="3"/>
            <path d="M975 716l-2 20-26 10-10 30-7 16 4 28 12 20 8 22" fill="none" stroke="#00eec8" stroke-width="6"/><path d="M947 745l-4 12-4 14M932 805l1 10 4 8" fill="none" stroke="#1040e8" stroke-width="3"/>
            <path d="M861 386l10 14-42 30-2 36-32 14 34-53z" fill="#6b6308"/><path d="M829 432l-30 44 26-14zM861 390l-20 32 24-18z" fill="#3c3a05"/><path d="M855 396l-18 28M866 398l-20 18M825 440l-20 34" stroke="#a89010"/>
            <path d="M795 482l4 10 3 20-3 14 0 16-8 6-4-4zM792 560l16 50 5-4-8-30-5-6z" fill="#16a56a"/><path d="M836 668q24 26 34 50l24 50-3 14-20-36z" fill="#10b43c"/><path d="M885 736l12 26-4 16z" fill="#14a050"/><path d="M928 850l12-2 2 10z" fill="#4a6a10"/>
            <path d="M920 378l180 50v18l-70-12-42-20-46-22z" fill="#c08000"/><path d="M940 384l160 44" stroke="#5a3a00" stroke-width="2"/><path d="M925 381l20 9 44 14 84 22v11l-30-1-30-8-40-14z" fill="#100c00"/><path d="M990 412l50 22-24 8-6-8z" fill="#2a5a10"/><path d="M995 414l50 22M1000 412l60 24" stroke="#5a9a20"/>
            <path d="M985 842l115-60v-5l-100 50z" fill="#6a8a10"/>
          </g>
          <g stroke="#777"><path d="M920.500 379v530M724 658.500h760M1286.500 379v60"/></g>
          <text transform="translate(915 437) rotate(-90)">525000 m</text><text x="1466" y="654">m</text>
          <path d="M488 380h109v503H488z" fill="#fffff4" stroke="#000" stroke-width="2"/><path d="M488 884h429v64H488z" fill="#fffff4" stroke="#000" stroke-width="2"/>
          <path d="M554.500 398.500h31v466h-31z" fill="url(#ramp)" stroke="#000"/>
          <path d="M542 398.500h12M542 433.500h12M542 479.500h12M542 526.500h12M542 573.500h12M542 619.500h12M542 666.500h12M542 713.500h12M542 759.500h12M542 806.500h12M542 853.500h12M542 864.500h12" stroke="#000"/>
          <g><text x="500" y="403">64 m</text><text x="500" y="438">60 m</text><text x="500" y="484">55 m</text><text x="500" y="531">50 m</text><text x="500" y="578">45 m</text><text x="500" y="624">40 m</text><text x="500" y="671">35 m</text><text x="500" y="718">30 m</text><text x="500" y="764">25 m</text><text x="500" y="811">20 m</text><text x="500" y="858">15 m</text></g>
          <path d="M519 902h366M519 893v19M592 893v19M665 893v19M738 893v19M811 893v19M885 893v19" stroke="#000" stroke-width="2"/>
          <g text-anchor="middle"><text x="520" y="936">0.0 km</text><text x="593" y="936">1.0 km</text><text x="666" y="936">2.0 km</text><text x="739" y="936">3.0 km</text><text x="812" y="936">4.0 km</text><text x="886" y="936">5.0 km</text></g>
        </svg></div>
      <div class="gm-st d-flex flex-shrink-0"><span>1:51510</span><span class="wide me-0">GK3</span><svg class="align-self-end sizer" width="12" height="12"><path d="M1 12L12 1M5 12l7-7M9 12l3-3" stroke="#888"/></svg></div>
    </div>
  </section>

  <!-- layer control -->
  <section class="win w-ly d-flex flex-column">
    <div class="win-title d-flex align-items-center flex-shrink-0"><svg class="ic ms-1 me-1"><path d="M1 2h14v12H1z" fill="#eee" stroke="#aaa"/><path d="M2 4h6v8H2z" fill="#387a6a"/><path d="M9 4h3v8H9z" fill="#9bc"/></svg><span>图层控制中心 (2 图层, 1已选)</span></div>
    <div class="win-body ly plain flex-grow-1"><div>当前打开的叠加层(右键单击图层查看选项)</div>
      <div class="ly-list"><label><input type="checkbox" checked><svg viewBox="0 0 14 14"><path d="M1 1h12v12H1z" fill="#ffffd0" stroke="#aa0" stroke-width="2"/><path d="M4 4h2M8 4h2M6 7h2M3 9h2M9 9h2M7 11h2" stroke="#22a" stroke-width="2"/></svg>raster.dtm.las [224,453]</label><label class="sel"><input type="checkbox" checked><svg viewBox="0 0 14 14"><path d="M1 1h12v12H1z" fill="#ff9" stroke="#8a0" stroke-width="2"/><path d="M3 10l3-4 2 3 2-4 2 5z" fill="#d22"/></svg>Triangulated Elevation Grid</label></div>
      <div class="d-flex gap-2 mt-2"><button class="cmd">元数据...</button><button class="cmd">选项...</button></div></div>
  </section>

  <nav class="ctx">
    <a href="#">缩放到 - 缩放到选中的图层(s)</a><a href="#">矫正 - 修改图层位置/投影 (重新矫正)</a><a href="#">设定选定图层显示的缩放级别...</a><a href="#">平移 - 以固定距离或变换坐标平移已选图层...</a><a href="#">缩放到图层全部细节(1:1像素)</a><hr>
    <a href="#">组 - 以已选要素创建组...</a><a href="#">注释 - 编辑已选图层注释...</a><a href="#">文本 - 设置打开文件时显示的文本...</a><a href="#" class="ck"><svg><use href="#ck"/></svg>允许从己选的图层选择/搜索要素</a><a href="#" class="ck"><svg><use href="#ck"/></svg>允许从选择的图输出(s)</a><hr>
    <a href="#" class="hot">输出 - 输出选中的图层(s) 到新文件...</a><a href="#">从所选图层创建工作文档...</a><a href="#">从选定的图层中创建图目录...</a><a href="#">BBOX/覆盖范围  - 从所选图层边界/覆盖范围创建面要素</a><a href="#">在高程单元中央创建点要素</a><a href="#">在选定图层中以相等的值创建面要素</a><a href="#">在已选图层中查找极值(最小/最大)高程值...</a><hr>
    <a href="#">关闭所有隐藏层</a><a href="#">隐藏所有关闭屏显的图层</a><a href="#">选择所有屏显图层</a><a href="#">反向选择</a><hr>
    <a href="#">以注释/分辨率/位置重排序地图...</a><a href="#">在另一层后移动选定的图层...</a><a href="#">Reverse Order of Selected Layers</a><a href="#">将所选的标记贴移到列表的顶部 (首先绘制)</a><a href="#">在列表中向上移动所选的覆盖 (提前绘制)</a><a href="#">在列表中向下移动所选的覆盖 (推迟绘制)</a><a href="#">将所选的标记贴移到列表的底部 (最后绘制)</a>
  </nav>
</main>

<footer class="task d-flex align-items-center flex-shrink-0">
  <button class="orb"><svg width="38" height="38" viewBox="0 0 38 38"><circle cx="19" cy="19" r="17.500" fill="url(#orbg)" stroke="#25435e"/><path d="M11 12q4-2 8 0l-2 7q-4-2-8 0z" fill="#f0602a"/><path d="M20 12q4 2 8 0l-2 7q-4 2-8 0z" fill="#8ac83a"/><path d="M9 20q4-2 8 0l-2 7q-4-2-8 0z" fill="#3a9ae8"/><path d="M18 20q4 2 8 0l-2 7q-4 2-8 0z" fill="#fbc52a"/><path d="M5 12a16 16 0 0 1 28 0q-14 6-28 0z" fill="#fff" opacity=".25"/></svg></button>
  <button class="tk run stk"><svg viewBox="0 0 32 32"><path d="M1 3h11l2 3h17v22H1z" fill="#f0d888" stroke="#b89840"/><path d="M3 2h8v4H3zM13 4h8v4h-8zM22 3h8v4h-8z" fill="#fff"/><path d="M4 2h4v3H4z" fill="#2a5"/><path d="M13 4h4v3h-4z" fill="#d33"/><path d="M23 3h4v3h-4z" fill="#38c"/><path d="M1 9h30v18H1z" fill="url(#gold)"/><path d="M5 31V20h22v11h-5v-5H10v5z" fill="#7cc6e8" stroke="#cceeff"/></svg></button>
  <button class="tk run"><svg viewBox="0 0 32 32"><path d="M7 5h21v23H7z" fill="#8ab8d8" stroke="#4a7a9a"/><path d="M3 4h20v24H3z" fill="#b5d8ec" stroke="#5a8aa8"/><circle cx="13" cy="16" r="9" fill="#f58220"/><path d="M10 10v12l9-6z" fill="#fff"/></svg></button>
  <button class="tk"><svg viewBox="0 0 32 32"><path d="M17 4a12 12 0 1 0 11 17h-7q-3 4-7 2-3-1-3-5h18Q29 4 17 4zM11 13q1-5 6-5t5 5z" fill="#35a7e6" stroke="#1b70b8"/><path d="M3 29C-3 24 18-3 29 2c3 2 1 5-1 8 0-4-2-6-6-4C12 11 3 22 6 29z" fill="#fcc92c" stroke="#d89a10"/></svg></button>
  <button class="tk run"><svg viewBox="0 0 32 32"><circle cx="16" cy="16" r="16" fill="#e86a12"/><path d="M14 3c9-2 16 5 15 14-3-3-8-2-10 2l-5 12q-6-1-9-5l9-3 1-5-6 1-5 2-1-2 7-7 3-7z" fill="#f6e9dd"/><path d="M22 6c5 5 5 9 4 13M17 14q5-1 6 4" fill="none" stroke="#e08a50" stroke-width="2"/></svg></button>
  <button class="tk"><svg viewBox="0 0 32 32"><path d="M5 4q2-4 6-2 5-3 10 0 5-2 8 2 2 3 0 6 3 6 0 12-4 9-13 9T3 22Q0 16 3 10 2 6 5 4z" fill="#fbbf1f" stroke="#d88a10"/><path d="M2 14C12 22 22 14 24 3" fill="none" stroke="#b87410" stroke-width="1.500"/><circle cx="13" cy="24" r="2.500" fill="#7a4a10"/><path d="M13 24q6 6 11 1" fill="none" stroke="#b87410"/></svg></button>
  <button class="tk"><svg viewBox="0 0 32 32"><rect width="32" height="32" rx="3" fill="#2ea4ec"/><circle cx="16" cy="13" r="6" fill="none" stroke="#fff" stroke-width="3"/><circle cx="8" cy="20" r="4" fill="none" stroke="#fff" stroke-width="3"/><path d="M12 21q4-5 7-1 6 7 8-2" fill="none" stroke="#fff" stroke-width="3"/><circle cx="28" cy="24" r="2" fill="#fff"/></svg></button>
  <button class="tk run stk"><svg><use href="#np"/></svg></button>
  <button class="tk run"><svg viewBox="0 0 32 32"><path d="M2 2h28v27H2z" fill="#b80f0f"/><path d="M2 2h28v10L2 20z" fill="#da2020"/><path d="M15 5q3 6-1 12T7 25q-3-1 2-4t13-3q5 2 2 3t-8-6-1-10z" fill="none" stroke="#fff" stroke-width="1.800"/></svg></button>
  <button class="tk run"><svg viewBox="0 0 32 32"><path d="M3 27V8q0-6 6-6h16l-3 5q-9 0-9 7v14z" fill="#fbe5da" stroke="#e0602a"/><path d="M7 10h23v19l-22-2z" fill="#fff" stroke="#dd5a22"/><path d="M10 14h8v10h-8zM12 19h6" fill="#e0561e" stroke="#fff"/><circle cx="23" cy="18" r="5" fill="#e0561e"/><path d="M23 18l5-3" stroke="#fff" stroke-width="2"/></svg></button>
  <button class="tk run"><svg viewBox="0 0 32 32"><path d="M3 27V8q0-6 6-6h18l-3 5q-11 0-11 7v14z" fill="#dbe8fa" stroke="#2a5aa8"/><path d="M9 8h21v21l-19-2z" fill="#fff" stroke="#88a"/><path d="M11 12l2 9 3-8 3 8 2-9M24 13h4M24 17h4M24 21h4M12 25h16" fill="none" stroke="#1d4a9c" stroke-width="2"/></svg></button>
  <button class="tk run"><svg viewBox="0 0 32 32"><circle cx="22" cy="7" r="6" fill="#5ab0f0"/><path d="M10 28q0-14 11-14t9 12q-6 8-20 2z" fill="#3a9af0"/><path d="M13 5c7 0 12 4 12 9s-5 9-11 9l-2 5-3-5c-5-1-8-4-8-9s5-9 12-9z" fill="#fdc52a" stroke="#e8a010"/></svg></button>
  <button class="tk run act"><svg><use href="#gma"/></svg></button>
  <button class="tk run stk hot"><svg viewBox="0 0 32 32"><path d="M0 0h32v32H0z" fill="#6fcbff"/><path d="M12 0l4 6 4-6" fill="none" stroke="#2a6aa8" stroke-width="2"/><path d="M8 7h16v22H8z" fill="#9fdcff" stroke="#fff"/><path d="M10 10h12v12H10z" fill="#fff"/><circle cx="16" cy="14" r="3" fill="#5a9ac8"/><path d="M11 22q0-5 5-5t5 5v4H11z" fill="#3a80b8"/></svg></button>
  <button class="tk run"><svg viewBox="0 0 32 32"><path d="M1 8h6v17l-6-2z" fill="#ccc" stroke="#777"/><path d="M7 3l23 2v16L8 20z" fill="#ddd" stroke="#888"/><path d="M9 5l19 2v12L10 18z" fill="#0a3a12"/><path d="M10 14l4-1 3-5 3 8 3-6 4 5" fill="none" stroke="#3f5"/><path d="M16 22h8l3 5-12-1z" fill="#bbb"/></svg></button>
  <button class="tk run"><svg><use href="#mm"/></svg></button>
  <button class="tk run"><svg><use href="#ue"/></svg></button>
  <div class="tray d-flex align-items-center ms-auto">
    <svg class="ic" viewBox="0 0 16 16"><path d="M0 6h16v8H0z" fill="#eee" stroke="#778"/><path d="M2 8h12M2 10h12M4 12h8" stroke="#667" stroke-dasharray="1 1"/><path d="M3 4q5-4 10 0" fill="none" stroke="#778"/></svg>
    <svg class="ic"><use href="#hp"/></svg><svg width="12" height="22"><path d="M4 3h6v4H4zM2 5h6v4H2z" fill="#8ba0b7" stroke="#fff"/><path d="M3 16h7l-3 4z" fill="#fff"/></svg><svg width="10" height="8"><path d="M1 7h8L5 2z" fill="#fff"/></svg>
    <svg class="ic ms-1" viewBox="0 0 16 16"><path d="M0 0h16v16H0z" fill="#5ad0d8"/><path d="M0 5l3 1v5l-3 1zM16 5l-3 1v5l3 1z" fill="#333"/><path d="M3 6h10v4l-4 3-6-3z" fill="#f0c8a0"/></svg>
    <svg class="ic" viewBox="0 0 16 16"><path d="M2 0v16" stroke="#fff" stroke-width="1.500"/><path d="M3 2h6v1h5v7H8V9H3z" fill="#fff" stroke="#667"/><circle cx="11" cy="11" r="5" fill="#d92b2b"/><path d="M9 9l4 4M13 9l-4 4" stroke="#fff" stroke-width="1.500"/></svg>
    <svg class="ic" viewBox="0 0 16 16"><path d="M5 4h10v8H5z" fill="#7f95ac" stroke="#fff" stroke-width="1.500"/><path d="M7 15h7M10 12v3M1 1v4h4V1M3 5v8" stroke="#fff" stroke-width="1.500" fill="none"/></svg>
    <svg class="ic" viewBox="0 0 16 16"><path d="M1 5h3l4-4v14l-4-4H1z" fill="#fff" stroke="#667"/><path d="M10 5q2 3 0 6M12 3q4 5 0 10" fill="none" stroke="#fff" stroke-width="1.500"/></svg>
    <div class="clock">14:49<br>2016/6/2</div>
  </div>
  <button class="peek" aria-label="显示桌面"></button>
</footer>
</body>
</html>
